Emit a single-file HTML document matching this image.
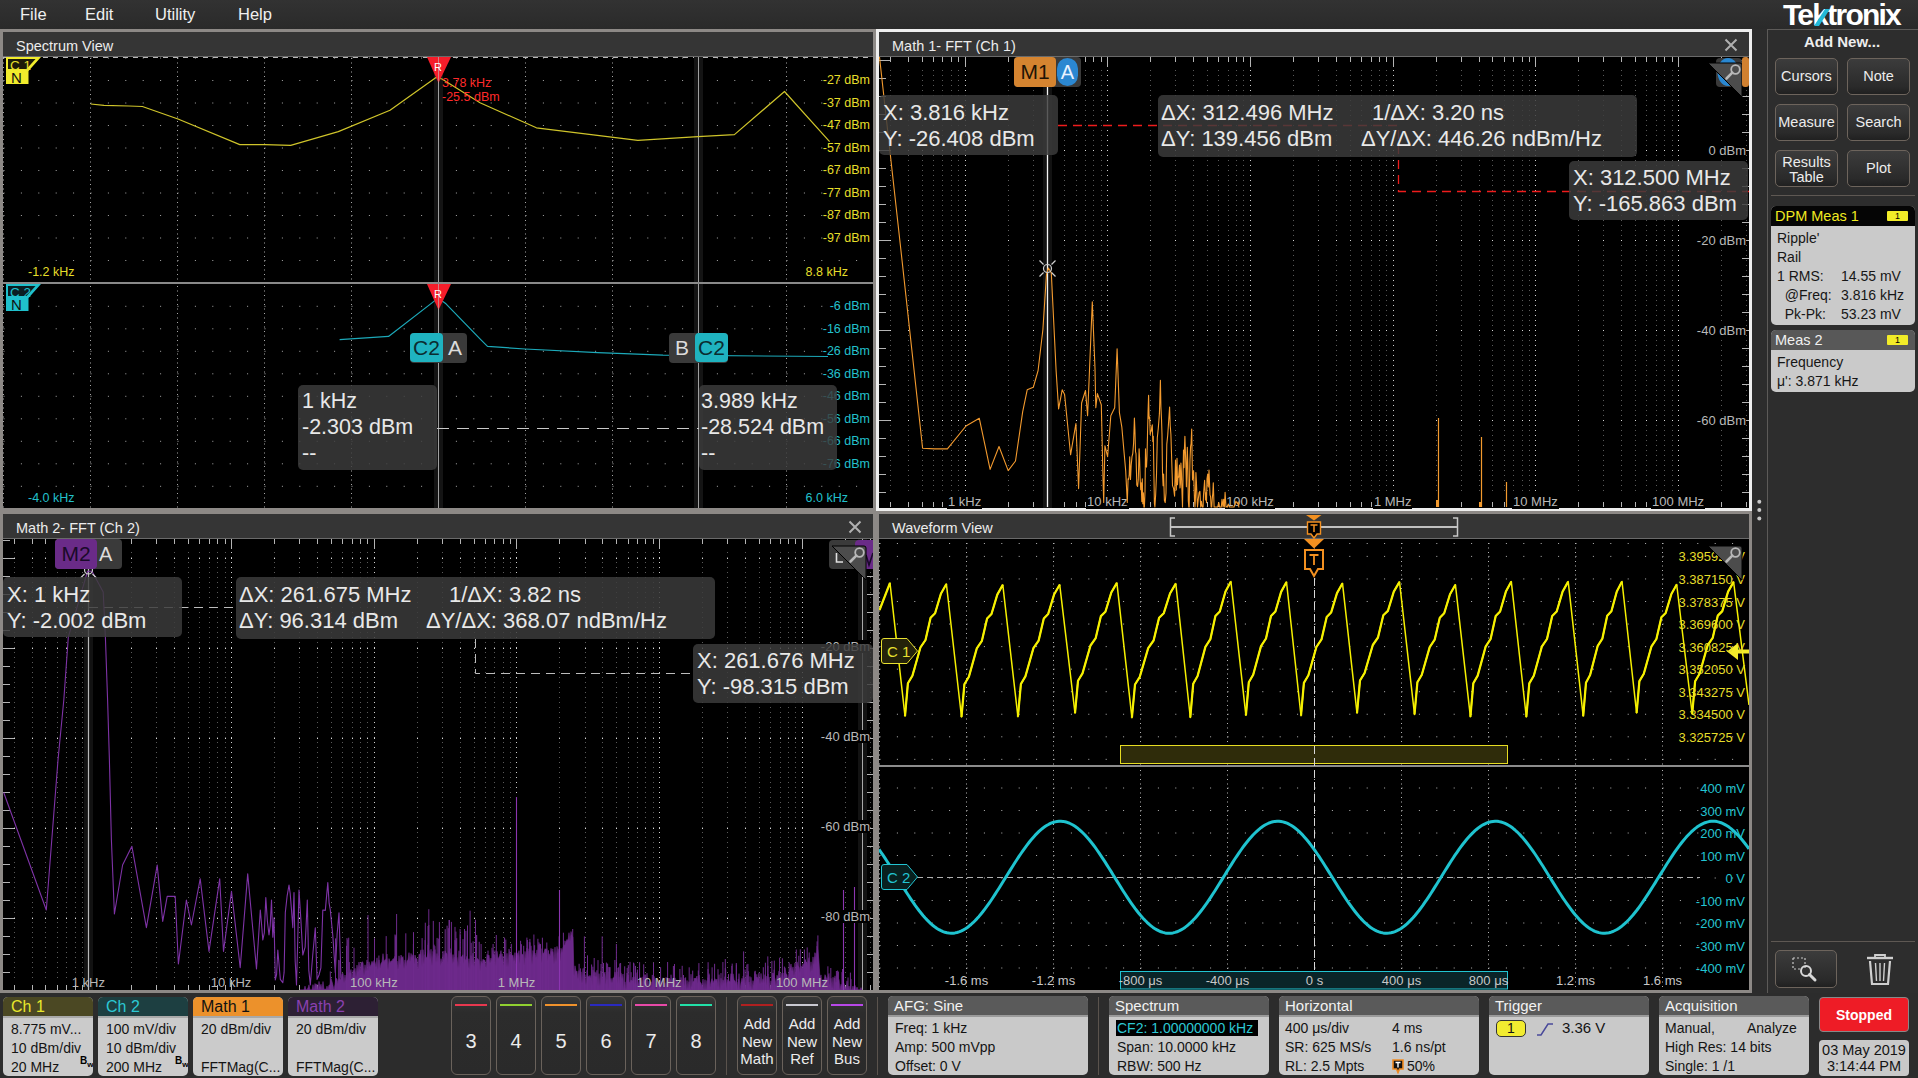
<!DOCTYPE html><html><head><meta charset="utf-8"><style>
html,body{margin:0;padding:0;}
body{width:1918px;height:1078px;overflow:hidden;position:relative;background:#2c2c2c;font-family:"Liberation Sans", sans-serif;}
div{box-sizing:border-box;}
svg{position:absolute;overflow:hidden;}
</style></head><body>
<div style="position:absolute;left:0px;top:0px;width:1918px;height:29px;background:linear-gradient(#323232,#2a2a2a);"></div>
<div style="position:absolute;left:20px;top:6px;font-size:16.5px;line-height:16.5px;color:#f0f0f0;font-weight:normal;white-space:nowrap;">File</div>
<div style="position:absolute;left:85px;top:6px;font-size:16.5px;line-height:16.5px;color:#f0f0f0;font-weight:normal;white-space:nowrap;">Edit</div>
<div style="position:absolute;left:155px;top:6px;font-size:16.5px;line-height:16.5px;color:#f0f0f0;font-weight:normal;white-space:nowrap;">Utility</div>
<div style="position:absolute;left:238px;top:6px;font-size:16.5px;line-height:16.5px;color:#f0f0f0;font-weight:normal;white-space:nowrap;">Help</div>
<div style="position:absolute;left:1783px;top:-1px;font-size:30px;line-height:32px;font-weight:bold;color:#fff;letter-spacing:-1.75px;">Tektronix</div>
<svg style="left:1808px;top:6px" width="26" height="22"><path d="M6 20 L11 20 L22 3 L17 3 Z" fill="#22b8d8"/></svg>
<div style="position:absolute;left:0px;top:29px;width:876px;height:482px;background:#8d8986;"></div>
<div style="position:absolute;left:3px;top:32px;width:870px;height:24px;background:#353535;"></div>
<div style="position:absolute;left:3px;top:56px;width:870px;height:1px;background:#6a6a6a;"></div>
<div style="position:absolute;left:3px;top:57px;width:870px;height:451px;background:#000;"></div>
<div style="position:absolute;left:16px;top:38.5px;font-size:14.5px;line-height:14.5px;color:#ececec;font-weight:normal;white-space:nowrap;">Spectrum View</div>
<div style="position:absolute;left:876px;top:511px;width:876px;height:482px;background:#8d8986;"></div>
<div style="position:absolute;left:879px;top:514px;width:870px;height:24px;background:#353535;"></div>
<div style="position:absolute;left:879px;top:538px;width:870px;height:1px;background:#6a6a6a;"></div>
<div style="position:absolute;left:879px;top:539px;width:870px;height:451px;background:#000;"></div>
<div style="position:absolute;left:892px;top:520.5px;font-size:14.5px;line-height:14.5px;color:#ececec;font-weight:normal;white-space:nowrap;">Waveform View</div>
<div style="position:absolute;left:0px;top:511px;width:876px;height:482px;background:#8d8986;"></div>
<div style="position:absolute;left:3px;top:514px;width:870px;height:24px;background:#353535;"></div>
<div style="position:absolute;left:3px;top:538px;width:870px;height:1px;background:#6a6a6a;"></div>
<div style="position:absolute;left:3px;top:539px;width:870px;height:451px;background:#000;"></div>
<div style="position:absolute;left:16px;top:520.5px;font-size:14.5px;line-height:14.5px;color:#ececec;font-weight:normal;white-space:nowrap;">Math 2- FFT (Ch 2)</div>
<svg style="left:848px;top:520px" width="14" height="14"><path d="M1.5 1.5L12.5 12.5M12.5 1.5L1.5 12.5" stroke="#b0b0b0" stroke-width="2"/></svg>
<div style="position:absolute;left:876px;top:29px;width:876px;height:482px;background:#eeeeee;"></div>
<div style="position:absolute;left:879px;top:32px;width:870px;height:24px;background:#353535;"></div>
<div style="position:absolute;left:879px;top:56px;width:870px;height:1px;background:#6a6a6a;"></div>
<div style="position:absolute;left:879px;top:57px;width:870px;height:451px;background:#000;"></div>
<div style="position:absolute;left:892px;top:38.5px;font-size:14.5px;line-height:14.5px;color:#ececec;font-weight:normal;white-space:nowrap;">Math 1- FFT (Ch 1)</div>
<svg style="left:1724px;top:38px" width="14" height="14"><path d="M1.5 1.5L12.5 12.5M12.5 1.5L1.5 12.5" stroke="#b0b0b0" stroke-width="2"/></svg>
<div style="position:absolute;left:1767px;top:29px;width:151px;height:964px;background:#2d2d2d;border-left:1px solid #5c5a58;border-top:1px solid #5c5a58;"></div>
<div style="position:absolute;left:1742px;top:34px;font-size:15px;line-height:15px;color:#eeeeee;font-weight:bold;white-space:nowrap;width:200px;text-align:center;">Add New...</div>
<div style="position:absolute;left:1775px;top:58px;width:63px;height:37px;border:1px solid #6d645c;border-radius:5px;background:linear-gradient(#3c3c3c,#2a2a2a 80%,#202020);"></div>
<div style="position:absolute;left:1775px;top:69px;font-size:14.5px;line-height:14.5px;color:#ececec;font-weight:normal;white-space:nowrap;width:63px;text-align:center;">Cursors</div>
<div style="position:absolute;left:1847px;top:58px;width:63px;height:37px;border:1px solid #6d645c;border-radius:5px;background:linear-gradient(#3c3c3c,#2a2a2a 80%,#202020);"></div>
<div style="position:absolute;left:1847px;top:69px;font-size:14.5px;line-height:14.5px;color:#ececec;font-weight:normal;white-space:nowrap;width:63px;text-align:center;">Note</div>
<div style="position:absolute;left:1775px;top:104px;width:63px;height:37px;border:1px solid #6d645c;border-radius:5px;background:linear-gradient(#3c3c3c,#2a2a2a 80%,#202020);"></div>
<div style="position:absolute;left:1775px;top:115px;font-size:14.5px;line-height:14.5px;color:#ececec;font-weight:normal;white-space:nowrap;width:63px;text-align:center;">Measure</div>
<div style="position:absolute;left:1847px;top:104px;width:63px;height:37px;border:1px solid #6d645c;border-radius:5px;background:linear-gradient(#3c3c3c,#2a2a2a 80%,#202020);"></div>
<div style="position:absolute;left:1847px;top:115px;font-size:14.5px;line-height:14.5px;color:#ececec;font-weight:normal;white-space:nowrap;width:63px;text-align:center;">Search</div>
<div style="position:absolute;left:1775px;top:150px;width:63px;height:37px;border:1px solid #6d645c;border-radius:5px;background:linear-gradient(#3c3c3c,#2a2a2a 80%,#202020);"></div>
<div style="position:absolute;left:1775px;top:155px;font-size:14.5px;line-height:14.5px;color:#ececec;font-weight:normal;white-space:nowrap;width:63px;text-align:center;">Results</div>
<div style="position:absolute;left:1775px;top:170px;font-size:14.5px;line-height:14.5px;color:#ececec;font-weight:normal;white-space:nowrap;width:63px;text-align:center;">Table</div>
<div style="position:absolute;left:1847px;top:150px;width:63px;height:37px;border:1px solid #6d645c;border-radius:5px;background:linear-gradient(#3c3c3c,#2a2a2a 80%,#202020);"></div>
<div style="position:absolute;left:1847px;top:161px;font-size:14.5px;line-height:14.5px;color:#ececec;font-weight:normal;white-space:nowrap;width:63px;text-align:center;">Plot</div>
<div style="position:absolute;left:1771px;top:195px;width:144px;height:1px;background:#5e5853;"></div>
<svg style="left:3px;top:57px" width="870" height="451" viewBox="3 57 870 451"><line x1="3.5" y1="58" x2="3.5" y2="282" stroke="#a8a8a8" stroke-width="1" stroke-dasharray="1 3.5"/><line x1="90.5" y1="58" x2="90.5" y2="282" stroke="#a8a8a8" stroke-width="1" stroke-dasharray="1 3.5"/><line x1="177.5" y1="58" x2="177.5" y2="282" stroke="#a8a8a8" stroke-width="1" stroke-dasharray="1 3.5"/><line x1="264.5" y1="58" x2="264.5" y2="282" stroke="#a8a8a8" stroke-width="1" stroke-dasharray="1 3.5"/><line x1="351.5" y1="58" x2="351.5" y2="282" stroke="#a8a8a8" stroke-width="1" stroke-dasharray="1 3.5"/><line x1="438.5" y1="58" x2="438.5" y2="282" stroke="#a8a8a8" stroke-width="1" stroke-dasharray="1 3.5"/><line x1="525.5" y1="58" x2="525.5" y2="282" stroke="#a8a8a8" stroke-width="1" stroke-dasharray="1 3.5"/><line x1="612.5" y1="58" x2="612.5" y2="282" stroke="#a8a8a8" stroke-width="1" stroke-dasharray="1 3.5"/><line x1="699.5" y1="58" x2="699.5" y2="282" stroke="#a8a8a8" stroke-width="1" stroke-dasharray="1 3.5"/><line x1="786.5" y1="58" x2="786.5" y2="282" stroke="#a8a8a8" stroke-width="1" stroke-dasharray="1 3.5"/><line x1="873.5" y1="58" x2="873.5" y2="282" stroke="#a8a8a8" stroke-width="1" stroke-dasharray="1 3.5"/><line x1="3.5" y1="58.0" x2="873" y2="58.0" stroke="#a8a8a8" stroke-width="1" stroke-dasharray="1 16.4"/><line x1="3.5" y1="80.5" x2="873" y2="80.5" stroke="#a8a8a8" stroke-width="1" stroke-dasharray="1 16.4"/><line x1="3.5" y1="103.0" x2="873" y2="103.0" stroke="#a8a8a8" stroke-width="1" stroke-dasharray="1 16.4"/><line x1="3.5" y1="125.5" x2="873" y2="125.5" stroke="#a8a8a8" stroke-width="1" stroke-dasharray="1 16.4"/><line x1="3.5" y1="148.0" x2="873" y2="148.0" stroke="#a8a8a8" stroke-width="1" stroke-dasharray="1 16.4"/><line x1="3.5" y1="170.5" x2="873" y2="170.5" stroke="#a8a8a8" stroke-width="1" stroke-dasharray="1 16.4"/><line x1="3.5" y1="193.0" x2="873" y2="193.0" stroke="#a8a8a8" stroke-width="1" stroke-dasharray="1 16.4"/><line x1="3.5" y1="215.5" x2="873" y2="215.5" stroke="#a8a8a8" stroke-width="1" stroke-dasharray="1 16.4"/><line x1="3.5" y1="238.0" x2="873" y2="238.0" stroke="#a8a8a8" stroke-width="1" stroke-dasharray="1 16.4"/><line x1="3.5" y1="260.5" x2="873" y2="260.5" stroke="#a8a8a8" stroke-width="1" stroke-dasharray="1 16.4"/><line x1="3" y1="57.5" x2="873" y2="57.5" stroke="#b8b8b8" stroke-width="1" stroke-dasharray="5 5"/><line x1="3.5" y1="286" x2="3.5" y2="508" stroke="#a8a8a8" stroke-width="1" stroke-dasharray="1 3.5"/><line x1="90.5" y1="286" x2="90.5" y2="508" stroke="#a8a8a8" stroke-width="1" stroke-dasharray="1 3.5"/><line x1="177.5" y1="286" x2="177.5" y2="508" stroke="#a8a8a8" stroke-width="1" stroke-dasharray="1 3.5"/><line x1="264.5" y1="286" x2="264.5" y2="508" stroke="#a8a8a8" stroke-width="1" stroke-dasharray="1 3.5"/><line x1="351.5" y1="286" x2="351.5" y2="508" stroke="#a8a8a8" stroke-width="1" stroke-dasharray="1 3.5"/><line x1="438.5" y1="286" x2="438.5" y2="508" stroke="#a8a8a8" stroke-width="1" stroke-dasharray="1 3.5"/><line x1="525.5" y1="286" x2="525.5" y2="508" stroke="#a8a8a8" stroke-width="1" stroke-dasharray="1 3.5"/><line x1="612.5" y1="286" x2="612.5" y2="508" stroke="#a8a8a8" stroke-width="1" stroke-dasharray="1 3.5"/><line x1="699.5" y1="286" x2="699.5" y2="508" stroke="#a8a8a8" stroke-width="1" stroke-dasharray="1 3.5"/><line x1="786.5" y1="286" x2="786.5" y2="508" stroke="#a8a8a8" stroke-width="1" stroke-dasharray="1 3.5"/><line x1="873.5" y1="286" x2="873.5" y2="508" stroke="#a8a8a8" stroke-width="1" stroke-dasharray="1 3.5"/><line x1="3.5" y1="306.3" x2="873" y2="306.3" stroke="#a8a8a8" stroke-width="1" stroke-dasharray="1 16.4"/><line x1="3.5" y1="328.8" x2="873" y2="328.8" stroke="#a8a8a8" stroke-width="1" stroke-dasharray="1 16.4"/><line x1="3.5" y1="351.3" x2="873" y2="351.3" stroke="#a8a8a8" stroke-width="1" stroke-dasharray="1 16.4"/><line x1="3.5" y1="373.8" x2="873" y2="373.8" stroke="#a8a8a8" stroke-width="1" stroke-dasharray="1 16.4"/><line x1="3.5" y1="396.3" x2="873" y2="396.3" stroke="#a8a8a8" stroke-width="1" stroke-dasharray="1 16.4"/><line x1="3.5" y1="418.8" x2="873" y2="418.8" stroke="#a8a8a8" stroke-width="1" stroke-dasharray="1 16.4"/><line x1="3.5" y1="441.3" x2="873" y2="441.3" stroke="#a8a8a8" stroke-width="1" stroke-dasharray="1 16.4"/><line x1="3.5" y1="463.8" x2="873" y2="463.8" stroke="#a8a8a8" stroke-width="1" stroke-dasharray="1 16.4"/><line x1="3.5" y1="486.3" x2="873" y2="486.3" stroke="#a8a8a8" stroke-width="1" stroke-dasharray="1 16.4"/><rect x="434.0" y="57" width="9" height="451" fill="#141414"/><line x1="438.5" y1="57" x2="438.5" y2="508" stroke="#a0a0a0" stroke-width="1"/><rect x="694.0" y="57" width="9" height="451" fill="#141414"/><line x1="698.5" y1="57" x2="698.5" y2="508" stroke="#a0a0a0" stroke-width="1"/><rect x="3" y="282" width="870" height="2" fill="#8a8a8a"/><path d="M90.7 104 L104 105.3 L129 106 L142.4 106.5 L178 119 L239.8 144.6 L265 144.6 L290.7 145.4 L338.3 131.6 L390 110.3 L436 77.5 L442 79 L480 102.8 L536.4 127.8 L637.9 140.4 L698 136.6 L734.4 134.6 L784.5 91.5 L829.6 141.6" fill="none" stroke="#cfc42a" stroke-width="1.2" stroke-linejoin="round" /><path d="M339.6 339.7 L388.5 336.4 L432.3 302.6 L438 298 L446 303.8 L480 338.9 L487.5 346.4 L525 349 L597.8 352.7 L663 355.2 L828 356.5" fill="none" stroke="#1ca9b9" stroke-width="1.2" stroke-linejoin="round" /><line x1="437" y1="428.5" x2="699" y2="428.5" stroke="#c8c8c8" stroke-width="1" stroke-dasharray="12 8"/><path d="M427 57 L451 57 L438.5 83 Z" fill="#f51d2a"/><line x1="438.5" y1="57" x2="438.5" y2="83" stroke="#c0c0c0" stroke-width="1" opacity="0.6"/><path d="M427 284 L451 284 L438.5 310 Z" fill="#f51d2a"/><line x1="438.5" y1="284" x2="438.5" y2="310" stroke="#c0c0c0" stroke-width="1" opacity="0.6"/><path d="M6 57 H41 L28.5 71 V84 H6 Z" fill="#f2ec2c"/><path d="M8 59 H35.5 L26.5 69 H8 Z" fill="#1d1b08"/><path d="M6 284 H41 L28.5 298 V311 H6 Z" fill="#1fc0cc"/><path d="M8 286 H35.5 L26.5 296 H8 Z" fill="#0a1e22"/></svg>
<div style="position:absolute;left:10px;top:58.5px;font-size:13.5px;line-height:13.5px;color:#e8e02c;font-weight:normal;white-space:nowrap;">C 1</div>
<div style="position:absolute;left:11px;top:70px;font-size:15px;line-height:15px;color:#111;font-weight:normal;white-space:nowrap;">N</div>
<div style="position:absolute;left:10px;top:285.5px;font-size:13.5px;line-height:13.5px;color:#1fc0cc;font-weight:normal;white-space:nowrap;">C 2</div>
<div style="position:absolute;left:11px;top:297px;font-size:15px;line-height:15px;color:#111;font-weight:normal;white-space:nowrap;">N</div>
<div style="position:absolute;left:434px;top:62px;font-size:11px;line-height:11px;color:#fff;font-weight:normal;white-space:nowrap;">R</div>
<div style="position:absolute;left:434px;top:289px;font-size:11px;line-height:11px;color:#fff;font-weight:normal;white-space:nowrap;">R</div>
<div style="position:absolute;left:442px;top:77px;font-size:12.5px;line-height:12.5px;color:#ff2a2a;font-weight:normal;white-space:nowrap;">3.78 kHz</div>
<div style="position:absolute;left:442px;top:91px;font-size:12.5px;line-height:12.5px;color:#ff2a2a;font-weight:normal;white-space:nowrap;">-25.5 dBm</div>
<div style="position:absolute;right:1048px;top:74.0px;font-size:12.5px;line-height:12.5px;color:#e6de2a;font-weight:normal;white-space:nowrap;">-27 dBm</div>
<div style="position:absolute;right:1048px;top:96.5px;font-size:12.5px;line-height:12.5px;color:#e6de2a;font-weight:normal;white-space:nowrap;">-37 dBm</div>
<div style="position:absolute;right:1048px;top:119.0px;font-size:12.5px;line-height:12.5px;color:#e6de2a;font-weight:normal;white-space:nowrap;">-47 dBm</div>
<div style="position:absolute;right:1048px;top:141.5px;font-size:12.5px;line-height:12.5px;color:#e6de2a;font-weight:normal;white-space:nowrap;">-57 dBm</div>
<div style="position:absolute;right:1048px;top:164.0px;font-size:12.5px;line-height:12.5px;color:#e6de2a;font-weight:normal;white-space:nowrap;">-67 dBm</div>
<div style="position:absolute;right:1048px;top:186.5px;font-size:12.5px;line-height:12.5px;color:#e6de2a;font-weight:normal;white-space:nowrap;">-77 dBm</div>
<div style="position:absolute;right:1048px;top:209.0px;font-size:12.5px;line-height:12.5px;color:#e6de2a;font-weight:normal;white-space:nowrap;">-87 dBm</div>
<div style="position:absolute;right:1048px;top:231.5px;font-size:12.5px;line-height:12.5px;color:#e6de2a;font-weight:normal;white-space:nowrap;">-97 dBm</div>
<div style="position:absolute;right:1048px;top:300.0px;font-size:12.5px;line-height:12.5px;color:#22c0cc;font-weight:normal;white-space:nowrap;">-6 dBm</div>
<div style="position:absolute;right:1048px;top:322.5px;font-size:12.5px;line-height:12.5px;color:#22c0cc;font-weight:normal;white-space:nowrap;">-16 dBm</div>
<div style="position:absolute;right:1048px;top:345.0px;font-size:12.5px;line-height:12.5px;color:#22c0cc;font-weight:normal;white-space:nowrap;">-26 dBm</div>
<div style="position:absolute;right:1048px;top:367.5px;font-size:12.5px;line-height:12.5px;color:#22c0cc;font-weight:normal;white-space:nowrap;">-36 dBm</div>
<div style="position:absolute;right:1048px;top:390.0px;font-size:12.5px;line-height:12.5px;color:#22c0cc;font-weight:normal;white-space:nowrap;">-46 dBm</div>
<div style="position:absolute;right:1048px;top:412.5px;font-size:12.5px;line-height:12.5px;color:#22c0cc;font-weight:normal;white-space:nowrap;">-56 dBm</div>
<div style="position:absolute;right:1048px;top:435.0px;font-size:12.5px;line-height:12.5px;color:#22c0cc;font-weight:normal;white-space:nowrap;">-66 dBm</div>
<div style="position:absolute;right:1048px;top:457.5px;font-size:12.5px;line-height:12.5px;color:#22c0cc;font-weight:normal;white-space:nowrap;">-76 dBm</div>
<div style="position:absolute;left:28px;top:266px;font-size:12.5px;line-height:12.5px;color:#e6de2a;font-weight:normal;white-space:nowrap;">-1.2 kHz</div>
<div style="position:absolute;right:1070px;top:266px;font-size:12.5px;line-height:12.5px;color:#e6de2a;font-weight:normal;white-space:nowrap;">8.8 kHz</div>
<div style="position:absolute;left:28px;top:492px;font-size:12.5px;line-height:12.5px;color:#22c0cc;font-weight:normal;white-space:nowrap;">-4.0 kHz</div>
<div style="position:absolute;right:1070px;top:492px;font-size:12.5px;line-height:12.5px;color:#22c0cc;font-weight:normal;white-space:nowrap;">6.0 kHz</div>
<div style="position:absolute;left:410px;top:333px;width:57px;height:30px;background:#3a3a3a;border-radius:4px;"></div>
<div style="position:absolute;left:410px;top:333px;width:33px;height:29px;background:#1fb3c0;border-radius:4px;color:#0b2c30;font-size:21px;line-height:29px;text-align:center;">C2</div><div style="position:absolute;left:443px;top:333px;width:24px;height:29px;background:transparent;border-radius:4px;color:#dcdcdc;font-size:21px;line-height:29px;text-align:center;">A</div>
<div style="position:absolute;left:669px;top:333px;width:59px;height:30px;background:#3a3a3a;border-radius:4px;"></div>
<div style="position:absolute;left:669px;top:333px;width:26px;height:29px;background:transparent;border-radius:4px;color:#dcdcdc;font-size:21px;line-height:29px;text-align:center;">B</div><div style="position:absolute;left:695px;top:333px;width:33px;height:29px;background:#1fb3c0;border-radius:4px;color:#0b2c30;font-size:21px;line-height:29px;text-align:center;">C2</div>
<div style="position:absolute;left:298px;top:385px;width:139px;height:85px;background:rgba(60,60,60,0.84);border-radius:5px;"></div><div style="position:absolute;left:302px;top:388px;font-size:21.5px;line-height:26px;color:#e8e8e8;white-space:nowrap;">1 kHz</div><div style="position:absolute;left:302px;top:414px;font-size:21.5px;line-height:26px;color:#e8e8e8;white-space:nowrap;">-2.303 dBm</div><div style="position:absolute;left:302px;top:440px;font-size:21.5px;line-height:26px;color:#e8e8e8;white-space:nowrap;">--</div>
<div style="position:absolute;left:699px;top:385px;width:138px;height:85px;background:rgba(60,60,60,0.84);border-radius:5px;"></div><div style="position:absolute;left:701px;top:388px;font-size:21.5px;line-height:26px;color:#e8e8e8;white-space:nowrap;">3.989 kHz</div><div style="position:absolute;left:701px;top:414px;font-size:21.5px;line-height:26px;color:#e8e8e8;white-space:nowrap;">-28.524 dBm</div><div style="position:absolute;left:701px;top:440px;font-size:21.5px;line-height:26px;color:#e8e8e8;white-space:nowrap;">--</div>
<svg style="left:879px;top:57px" width="870" height="451" viewBox="879 57 870 451"><line x1="890.5" y1="70" x2="890.5" y2="495" stroke="#5a5a5a" stroke-width="1" stroke-dasharray="1 4"/><line x1="908.5" y1="70" x2="908.5" y2="495" stroke="#5a5a5a" stroke-width="1" stroke-dasharray="1 4"/><line x1="922.5" y1="70" x2="922.5" y2="495" stroke="#5a5a5a" stroke-width="1" stroke-dasharray="1 4"/><line x1="933.5" y1="70" x2="933.5" y2="495" stroke="#5a5a5a" stroke-width="1" stroke-dasharray="1 4"/><line x1="942.5" y1="70" x2="942.5" y2="495" stroke="#5a5a5a" stroke-width="1" stroke-dasharray="1 4"/><line x1="951.5" y1="70" x2="951.5" y2="495" stroke="#5a5a5a" stroke-width="1" stroke-dasharray="1 4"/><line x1="958.5" y1="70" x2="958.5" y2="495" stroke="#5a5a5a" stroke-width="1" stroke-dasharray="1 4"/><line x1="965.5" y1="70" x2="965.5" y2="495" stroke="#cfcfcf" stroke-width="1" stroke-dasharray="1 4"/><line x1="1008.5" y1="70" x2="1008.5" y2="495" stroke="#5a5a5a" stroke-width="1" stroke-dasharray="1 4"/><line x1="1033.5" y1="70" x2="1033.5" y2="495" stroke="#5a5a5a" stroke-width="1" stroke-dasharray="1 4"/><line x1="1051.5" y1="70" x2="1051.5" y2="495" stroke="#5a5a5a" stroke-width="1" stroke-dasharray="1 4"/><line x1="1064.5" y1="70" x2="1064.5" y2="495" stroke="#5a5a5a" stroke-width="1" stroke-dasharray="1 4"/><line x1="1076.5" y1="70" x2="1076.5" y2="495" stroke="#5a5a5a" stroke-width="1" stroke-dasharray="1 4"/><line x1="1085.5" y1="70" x2="1085.5" y2="495" stroke="#5a5a5a" stroke-width="1" stroke-dasharray="1 4"/><line x1="1093.5" y1="70" x2="1093.5" y2="495" stroke="#5a5a5a" stroke-width="1" stroke-dasharray="1 4"/><line x1="1101.5" y1="70" x2="1101.5" y2="495" stroke="#5a5a5a" stroke-width="1" stroke-dasharray="1 4"/><line x1="1107.5" y1="70" x2="1107.5" y2="495" stroke="#cfcfcf" stroke-width="1" stroke-dasharray="1 4"/><line x1="1150.5" y1="70" x2="1150.5" y2="495" stroke="#5a5a5a" stroke-width="1" stroke-dasharray="1 4"/><line x1="1175.5" y1="70" x2="1175.5" y2="495" stroke="#5a5a5a" stroke-width="1" stroke-dasharray="1 4"/><line x1="1193.5" y1="70" x2="1193.5" y2="495" stroke="#5a5a5a" stroke-width="1" stroke-dasharray="1 4"/><line x1="1207.5" y1="70" x2="1207.5" y2="495" stroke="#5a5a5a" stroke-width="1" stroke-dasharray="1 4"/><line x1="1218.5" y1="70" x2="1218.5" y2="495" stroke="#5a5a5a" stroke-width="1" stroke-dasharray="1 4"/><line x1="1228.5" y1="70" x2="1228.5" y2="495" stroke="#5a5a5a" stroke-width="1" stroke-dasharray="1 4"/><line x1="1236.5" y1="70" x2="1236.5" y2="495" stroke="#5a5a5a" stroke-width="1" stroke-dasharray="1 4"/><line x1="1243.5" y1="70" x2="1243.5" y2="495" stroke="#5a5a5a" stroke-width="1" stroke-dasharray="1 4"/><line x1="1250.5" y1="70" x2="1250.5" y2="495" stroke="#cfcfcf" stroke-width="1" stroke-dasharray="1 4"/><line x1="1293.5" y1="70" x2="1293.5" y2="495" stroke="#5a5a5a" stroke-width="1" stroke-dasharray="1 4"/><line x1="1318.5" y1="70" x2="1318.5" y2="495" stroke="#5a5a5a" stroke-width="1" stroke-dasharray="1 4"/><line x1="1336.5" y1="70" x2="1336.5" y2="495" stroke="#5a5a5a" stroke-width="1" stroke-dasharray="1 4"/><line x1="1350.5" y1="70" x2="1350.5" y2="495" stroke="#5a5a5a" stroke-width="1" stroke-dasharray="1 4"/><line x1="1361.5" y1="70" x2="1361.5" y2="495" stroke="#5a5a5a" stroke-width="1" stroke-dasharray="1 4"/><line x1="1371.5" y1="70" x2="1371.5" y2="495" stroke="#5a5a5a" stroke-width="1" stroke-dasharray="1 4"/><line x1="1379.5" y1="70" x2="1379.5" y2="495" stroke="#5a5a5a" stroke-width="1" stroke-dasharray="1 4"/><line x1="1386.5" y1="70" x2="1386.5" y2="495" stroke="#5a5a5a" stroke-width="1" stroke-dasharray="1 4"/><line x1="1393.5" y1="70" x2="1393.5" y2="495" stroke="#cfcfcf" stroke-width="1" stroke-dasharray="1 4"/><line x1="1436.5" y1="70" x2="1436.5" y2="495" stroke="#5a5a5a" stroke-width="1" stroke-dasharray="1 4"/><line x1="1461.5" y1="70" x2="1461.5" y2="495" stroke="#5a5a5a" stroke-width="1" stroke-dasharray="1 4"/><line x1="1479.5" y1="70" x2="1479.5" y2="495" stroke="#5a5a5a" stroke-width="1" stroke-dasharray="1 4"/><line x1="1492.5" y1="70" x2="1492.5" y2="495" stroke="#5a5a5a" stroke-width="1" stroke-dasharray="1 4"/><line x1="1504.5" y1="70" x2="1504.5" y2="495" stroke="#5a5a5a" stroke-width="1" stroke-dasharray="1 4"/><line x1="1513.5" y1="70" x2="1513.5" y2="495" stroke="#5a5a5a" stroke-width="1" stroke-dasharray="1 4"/><line x1="1522.5" y1="70" x2="1522.5" y2="495" stroke="#5a5a5a" stroke-width="1" stroke-dasharray="1 4"/><line x1="1529.5" y1="70" x2="1529.5" y2="495" stroke="#5a5a5a" stroke-width="1" stroke-dasharray="1 4"/><line x1="1535.5" y1="70" x2="1535.5" y2="495" stroke="#cfcfcf" stroke-width="1" stroke-dasharray="1 4"/><line x1="1578.5" y1="70" x2="1578.5" y2="495" stroke="#5a5a5a" stroke-width="1" stroke-dasharray="1 4"/><line x1="1603.5" y1="70" x2="1603.5" y2="495" stroke="#5a5a5a" stroke-width="1" stroke-dasharray="1 4"/><line x1="1621.5" y1="70" x2="1621.5" y2="495" stroke="#5a5a5a" stroke-width="1" stroke-dasharray="1 4"/><line x1="1635.5" y1="70" x2="1635.5" y2="495" stroke="#5a5a5a" stroke-width="1" stroke-dasharray="1 4"/><line x1="1646.5" y1="70" x2="1646.5" y2="495" stroke="#5a5a5a" stroke-width="1" stroke-dasharray="1 4"/><line x1="1656.5" y1="70" x2="1656.5" y2="495" stroke="#5a5a5a" stroke-width="1" stroke-dasharray="1 4"/><line x1="1664.5" y1="70" x2="1664.5" y2="495" stroke="#5a5a5a" stroke-width="1" stroke-dasharray="1 4"/><line x1="1672.5" y1="70" x2="1672.5" y2="495" stroke="#5a5a5a" stroke-width="1" stroke-dasharray="1 4"/><line x1="1678.5" y1="70" x2="1678.5" y2="495" stroke="#cfcfcf" stroke-width="1" stroke-dasharray="1 4"/><line x1="1721.5" y1="70" x2="1721.5" y2="495" stroke="#5a5a5a" stroke-width="1" stroke-dasharray="1 4"/><line x1="1746.5" y1="70" x2="1746.5" y2="495" stroke="#5a5a5a" stroke-width="1" stroke-dasharray="1 4"/><path d="M890 60h1v1h-1zM908 60h1v1h-1zM922 60h1v1h-1zM933 60h1v1h-1zM942 60h1v1h-1zM951 60h1v1h-1zM958 60h1v1h-1zM965 60h1v1h-1zM1008 60h1v1h-1zM1033 60h1v1h-1zM1051 60h1v1h-1zM1064 60h1v1h-1zM1076 60h1v1h-1zM1085 60h1v1h-1zM1093 60h1v1h-1zM1101 60h1v1h-1zM1107 60h1v1h-1zM1150 60h1v1h-1zM1175 60h1v1h-1zM1193 60h1v1h-1zM1207 60h1v1h-1zM1218 60h1v1h-1zM1228 60h1v1h-1zM1236 60h1v1h-1zM1243 60h1v1h-1zM1250 60h1v1h-1zM1293 60h1v1h-1zM1318 60h1v1h-1zM1336 60h1v1h-1zM1350 60h1v1h-1zM1361 60h1v1h-1zM1371 60h1v1h-1zM1379 60h1v1h-1zM1386 60h1v1h-1zM1393 60h1v1h-1zM1436 60h1v1h-1zM1461 60h1v1h-1zM1479 60h1v1h-1zM1492 60h1v1h-1zM1504 60h1v1h-1zM1513 60h1v1h-1zM1522 60h1v1h-1zM1529 60h1v1h-1zM1535 60h1v1h-1zM1578 60h1v1h-1zM1603 60h1v1h-1zM1621 60h1v1h-1zM1635 60h1v1h-1zM1646 60h1v1h-1zM1656 60h1v1h-1zM1664 60h1v1h-1zM1672 60h1v1h-1zM1678 60h1v1h-1zM1721 60h1v1h-1zM1746 60h1v1h-1zM890 150h1v1h-1zM908 150h1v1h-1zM922 150h1v1h-1zM933 150h1v1h-1zM942 150h1v1h-1zM951 150h1v1h-1zM958 150h1v1h-1zM965 150h1v1h-1zM1008 150h1v1h-1zM1033 150h1v1h-1zM1051 150h1v1h-1zM1064 150h1v1h-1zM1076 150h1v1h-1zM1085 150h1v1h-1zM1093 150h1v1h-1zM1101 150h1v1h-1zM1107 150h1v1h-1zM1150 150h1v1h-1zM1175 150h1v1h-1zM1193 150h1v1h-1zM1207 150h1v1h-1zM1218 150h1v1h-1zM1228 150h1v1h-1zM1236 150h1v1h-1zM1243 150h1v1h-1zM1250 150h1v1h-1zM1293 150h1v1h-1zM1318 150h1v1h-1zM1336 150h1v1h-1zM1350 150h1v1h-1zM1361 150h1v1h-1zM1371 150h1v1h-1zM1379 150h1v1h-1zM1386 150h1v1h-1zM1393 150h1v1h-1zM1436 150h1v1h-1zM1461 150h1v1h-1zM1479 150h1v1h-1zM1492 150h1v1h-1zM1504 150h1v1h-1zM1513 150h1v1h-1zM1522 150h1v1h-1zM1529 150h1v1h-1zM1535 150h1v1h-1zM1578 150h1v1h-1zM1603 150h1v1h-1zM1621 150h1v1h-1zM1635 150h1v1h-1zM1646 150h1v1h-1zM1656 150h1v1h-1zM1664 150h1v1h-1zM1672 150h1v1h-1zM1678 150h1v1h-1zM1721 150h1v1h-1zM1746 150h1v1h-1zM890 240h1v1h-1zM908 240h1v1h-1zM922 240h1v1h-1zM933 240h1v1h-1zM942 240h1v1h-1zM951 240h1v1h-1zM958 240h1v1h-1zM965 240h1v1h-1zM1008 240h1v1h-1zM1033 240h1v1h-1zM1051 240h1v1h-1zM1064 240h1v1h-1zM1076 240h1v1h-1zM1085 240h1v1h-1zM1093 240h1v1h-1zM1101 240h1v1h-1zM1107 240h1v1h-1zM1150 240h1v1h-1zM1175 240h1v1h-1zM1193 240h1v1h-1zM1207 240h1v1h-1zM1218 240h1v1h-1zM1228 240h1v1h-1zM1236 240h1v1h-1zM1243 240h1v1h-1zM1250 240h1v1h-1zM1293 240h1v1h-1zM1318 240h1v1h-1zM1336 240h1v1h-1zM1350 240h1v1h-1zM1361 240h1v1h-1zM1371 240h1v1h-1zM1379 240h1v1h-1zM1386 240h1v1h-1zM1393 240h1v1h-1zM1436 240h1v1h-1zM1461 240h1v1h-1zM1479 240h1v1h-1zM1492 240h1v1h-1zM1504 240h1v1h-1zM1513 240h1v1h-1zM1522 240h1v1h-1zM1529 240h1v1h-1zM1535 240h1v1h-1zM1578 240h1v1h-1zM1603 240h1v1h-1zM1621 240h1v1h-1zM1635 240h1v1h-1zM1646 240h1v1h-1zM1656 240h1v1h-1zM1664 240h1v1h-1zM1672 240h1v1h-1zM1678 240h1v1h-1zM1721 240h1v1h-1zM1746 240h1v1h-1zM890 330h1v1h-1zM908 330h1v1h-1zM922 330h1v1h-1zM933 330h1v1h-1zM942 330h1v1h-1zM951 330h1v1h-1zM958 330h1v1h-1zM965 330h1v1h-1zM1008 330h1v1h-1zM1033 330h1v1h-1zM1051 330h1v1h-1zM1064 330h1v1h-1zM1076 330h1v1h-1zM1085 330h1v1h-1zM1093 330h1v1h-1zM1101 330h1v1h-1zM1107 330h1v1h-1zM1150 330h1v1h-1zM1175 330h1v1h-1zM1193 330h1v1h-1zM1207 330h1v1h-1zM1218 330h1v1h-1zM1228 330h1v1h-1zM1236 330h1v1h-1zM1243 330h1v1h-1zM1250 330h1v1h-1zM1293 330h1v1h-1zM1318 330h1v1h-1zM1336 330h1v1h-1zM1350 330h1v1h-1zM1361 330h1v1h-1zM1371 330h1v1h-1zM1379 330h1v1h-1zM1386 330h1v1h-1zM1393 330h1v1h-1zM1436 330h1v1h-1zM1461 330h1v1h-1zM1479 330h1v1h-1zM1492 330h1v1h-1zM1504 330h1v1h-1zM1513 330h1v1h-1zM1522 330h1v1h-1zM1529 330h1v1h-1zM1535 330h1v1h-1zM1578 330h1v1h-1zM1603 330h1v1h-1zM1621 330h1v1h-1zM1635 330h1v1h-1zM1646 330h1v1h-1zM1656 330h1v1h-1zM1664 330h1v1h-1zM1672 330h1v1h-1zM1678 330h1v1h-1zM1721 330h1v1h-1zM1746 330h1v1h-1zM890 420h1v1h-1zM908 420h1v1h-1zM922 420h1v1h-1zM933 420h1v1h-1zM942 420h1v1h-1zM951 420h1v1h-1zM958 420h1v1h-1zM965 420h1v1h-1zM1008 420h1v1h-1zM1033 420h1v1h-1zM1051 420h1v1h-1zM1064 420h1v1h-1zM1076 420h1v1h-1zM1085 420h1v1h-1zM1093 420h1v1h-1zM1101 420h1v1h-1zM1107 420h1v1h-1zM1150 420h1v1h-1zM1175 420h1v1h-1zM1193 420h1v1h-1zM1207 420h1v1h-1zM1218 420h1v1h-1zM1228 420h1v1h-1zM1236 420h1v1h-1zM1243 420h1v1h-1zM1250 420h1v1h-1zM1293 420h1v1h-1zM1318 420h1v1h-1zM1336 420h1v1h-1zM1350 420h1v1h-1zM1361 420h1v1h-1zM1371 420h1v1h-1zM1379 420h1v1h-1zM1386 420h1v1h-1zM1393 420h1v1h-1zM1436 420h1v1h-1zM1461 420h1v1h-1zM1479 420h1v1h-1zM1492 420h1v1h-1zM1504 420h1v1h-1zM1513 420h1v1h-1zM1522 420h1v1h-1zM1529 420h1v1h-1zM1535 420h1v1h-1zM1578 420h1v1h-1zM1603 420h1v1h-1zM1621 420h1v1h-1zM1635 420h1v1h-1zM1646 420h1v1h-1zM1656 420h1v1h-1zM1664 420h1v1h-1zM1672 420h1v1h-1zM1678 420h1v1h-1zM1721 420h1v1h-1zM1746 420h1v1h-1z" fill="#d8d8d8"/><path d="M890.5 57v5M890.5 507v-5M908.5 57v5M908.5 507v-5M922.5 57v5M922.5 507v-5M933.5 57v5M933.5 507v-5M942.5 57v5M942.5 507v-5M951.5 57v5M951.5 507v-5M958.5 57v5M958.5 507v-5M965.5 57v10M965.5 507v-10M1008.5 57v5M1008.5 507v-5M1033.5 57v5M1033.5 507v-5M1051.5 57v5M1051.5 507v-5M1064.5 57v5M1064.5 507v-5M1076.5 57v5M1076.5 507v-5M1085.5 57v5M1085.5 507v-5M1093.5 57v5M1093.5 507v-5M1101.5 57v5M1101.5 507v-5M1107.5 57v10M1107.5 507v-10M1150.5 57v5M1150.5 507v-5M1175.5 57v5M1175.5 507v-5M1193.5 57v5M1193.5 507v-5M1207.5 57v5M1207.5 507v-5M1218.5 57v5M1218.5 507v-5M1228.5 57v5M1228.5 507v-5M1236.5 57v5M1236.5 507v-5M1243.5 57v5M1243.5 507v-5M1250.5 57v10M1250.5 507v-10M1293.5 57v5M1293.5 507v-5M1318.5 57v5M1318.5 507v-5M1336.5 57v5M1336.5 507v-5M1350.5 57v5M1350.5 507v-5M1361.5 57v5M1361.5 507v-5M1371.5 57v5M1371.5 507v-5M1379.5 57v5M1379.5 507v-5M1386.5 57v5M1386.5 507v-5M1393.5 57v10M1393.5 507v-10M1436.5 57v5M1436.5 507v-5M1461.5 57v5M1461.5 507v-5M1479.5 57v5M1479.5 507v-5M1492.5 57v5M1492.5 507v-5M1504.5 57v5M1504.5 507v-5M1513.5 57v5M1513.5 507v-5M1522.5 57v5M1522.5 507v-5M1529.5 57v5M1529.5 507v-5M1535.5 57v10M1535.5 507v-10M1578.5 57v5M1578.5 507v-5M1603.5 57v5M1603.5 507v-5M1621.5 57v5M1621.5 507v-5M1635.5 57v5M1635.5 507v-5M1646.5 57v5M1646.5 507v-5M1656.5 57v5M1656.5 507v-5M1664.5 57v5M1664.5 507v-5M1672.5 57v5M1672.5 507v-5M1678.5 57v10M1678.5 507v-10M1721.5 57v5M1721.5 507v-5M1746.5 57v5M1746.5 507v-5" stroke="#b4b4b4" stroke-width="1"/><path d="M879 60.5h11M1749 60.5h-11M879 78.5h7M1749 78.5h-7M879 96.5h7M1749 96.5h-7M879 114.5h7M1749 114.5h-7M879 132.5h7M1749 132.5h-7M879 150.5h11M1749 150.5h-11M879 168.5h7M1749 168.5h-7M879 186.5h7M1749 186.5h-7M879 204.5h7M1749 204.5h-7M879 222.5h7M1749 222.5h-7M879 240.5h11M1749 240.5h-11M879 258.5h7M1749 258.5h-7M879 276.5h7M1749 276.5h-7M879 294.5h7M1749 294.5h-7M879 312.5h7M1749 312.5h-7M879 330.5h11M1749 330.5h-11M879 348.5h7M1749 348.5h-7M879 366.5h7M1749 366.5h-7M879 384.5h7M1749 384.5h-7M879 402.5h7M1749 402.5h-7M879 420.5h11M1749 420.5h-11M879 438.5h7M1749 438.5h-7M879 456.5h7M1749 456.5h-7M879 474.5h7M1749 474.5h-7M879 492.5h7M1749 492.5h-7" stroke="#b4b4b4" stroke-width="1"/><rect x="1043" y="57" width="9" height="451" fill="#121212"/><line x1="1047.5" y1="86" x2="1047.5" y2="507" stroke="#f4f4f4" stroke-width="1.3"/><path d="M1058 125.5 H1398.5 V191.5 H1749" fill="none" stroke="#ee1c1c" stroke-width="1.3" stroke-dasharray="9 6"/></svg>
<div style="position:absolute;left:764.6px;width:400px;text-align:center;top:495px;font-size:13px;line-height:13px;color:#b8b8b8;font-weight:normal;white-space:nowrap;"><span style="background:#000;padding:0 1px">1 kHz</span></div>
<div style="position:absolute;left:907.3px;width:400px;text-align:center;top:495px;font-size:13px;line-height:13px;color:#b8b8b8;font-weight:normal;white-space:nowrap;"><span style="background:#000;padding:0 1px">10 kHz</span></div>
<div style="position:absolute;left:1050px;width:400px;text-align:center;top:495px;font-size:13px;line-height:13px;color:#b8b8b8;font-weight:normal;white-space:nowrap;"><span style="background:#000;padding:0 1px">100 kHz</span></div>
<div style="position:absolute;left:1192.7px;width:400px;text-align:center;top:495px;font-size:13px;line-height:13px;color:#b8b8b8;font-weight:normal;white-space:nowrap;"><span style="background:#000;padding:0 1px">1 MHz</span></div>
<div style="position:absolute;left:1335.4px;width:400px;text-align:center;top:495px;font-size:13px;line-height:13px;color:#b8b8b8;font-weight:normal;white-space:nowrap;"><span style="background:#000;padding:0 1px">10 MHz</span></div>
<div style="position:absolute;left:1478.1px;width:400px;text-align:center;top:495px;font-size:13px;line-height:13px;color:#b8b8b8;font-weight:normal;white-space:nowrap;"><span style="background:#000;padding:0 1px">100 MHz</span></div>
<svg style="left:879px;top:57px" width="870" height="451" viewBox="879 57 870 451"><path d="M879.5 57 L900.9 250 L922.6 448.2 L934.7 448.9 L947.4 448.9 L966 426 L979.3 418.3 L990.1 469.4 L999 446.5 L1008.2 470.6 L1015.5 461 L1022.7 411.6 L1027.2 389.8 L1033.3 387.3 L1038.1 370.5 L1042.9 329.5 L1046.5 274.1 L1048.4 268 L1051.3 272.9 L1056.1 370.5 L1058.6 409 L1062.2 389.8 L1064.6 394.6 L1070.6 454.8 L1075.9 423.5 L1078.6 488.6 L1081.6 403 L1085.5 390.5 L1087.6 415.7 L1089.5 370 L1092.3 301.8 L1095 368.4 L1095.8 407.8 L1097.4 393.6 L1101.3 404.7 L1102.9 474 L1103.7 502.5 L1104.9 445.7 L1107.6 456.7 L1110.8 415.7 L1114.7 407.8 L1117.1 348.7 L1119.4 412.6 L1121.8 426.8 L1125.7 470.9 L1127.3 502.5 L1128.1 478.8 L1128.6 479.5 L1129.2 475.4 L1129.7 456.7 L1130.5 479.4 L1131.2 465.1 L1132 456.7 L1132.8 453.5 L1133.6 443.1 L1134.4 418 L1134.9 429.6 L1135.5 451.6 L1136 453.6 L1136.8 485 L1137.6 486.5 L1138.3 479.4 L1139.1 448.8 L1139.6 459.4 L1140.2 479.5 L1140.7 489.8 L1141.2 482.9 L1141.8 501.6 L1142.3 478.8 L1142.8 503.7 L1143.4 492.9 L1143.9 507 L1144.4 507 L1145 492.1 L1145.5 448.8 L1146 465.7 L1146.5 467.1 L1147 456.7 L1147.5 435.1 L1148.1 410.2 L1148.6 395.2 L1149.1 418.7 L1149.7 417.3 L1150.2 434.6 L1150.7 431.9 L1151.3 430.9 L1151.8 426.8 L1152.3 424.9 L1152.8 441.4 L1153.3 436.2 L1153.8 467.5 L1154.4 503.5 L1154.9 507 L1155.7 494 L1156.5 474.7 L1157.3 437.8 L1158.3 428.1 L1159.4 413.9 L1160.4 380.2 L1160.9 406.5 L1161.5 419.1 L1162 434.6 L1162.5 472.7 L1163.1 485.7 L1163.6 474 L1164.4 500.4 L1165.2 502.6 L1166 493 L1166.8 444.1 L1167.7 435.5 L1168.7 420.5 L1169.6 407 L1170.2 425.5 L1170.9 434.2 L1171.5 453.6 L1172.5 485.6 L1173.6 488.4 L1174.6 496.2 L1175.5 460 L1176.3 490 L1177 458.3 L1177.5 484.8 L1178.1 476.9 L1178.6 477.2 L1179.5 465 L1180 488 L1180.4 483.9 L1180.9 463 L1181.4 471.7 L1182 492.8 L1182.5 507 L1183.5 450 L1184 467.6 L1184.4 449.4 L1184.9 436.2 L1186 470 L1186.4 486.8 L1186.9 461.2 L1187.3 447.3 L1187.8 463.5 L1188.3 500.6 L1188.8 507 L1189.2 507 L1189.6 478 L1190 460 L1190.6 446.4 L1191.1 443.7 L1191.7 429.1 L1192.5 480 L1193.6 470.9 L1194.5 500 L1195 507 L1195.4 499.2 L1195.9 472.5 L1196.4 481.7 L1197 497.1 L1197.5 507 L1198.3 498.9 L1199.1 492.5 L1199.9 491.4 L1200.7 507 L1201.4 501.3 L1202.2 507 L1202.6 507 L1203.1 506.9 L1203.5 495 L1204.6 480.4 L1205.5 500 L1206 492.8 L1206.5 502.6 L1207 478.8 L1207.7 474 L1208.3 487 L1209 470.1 L1210 495 L1210.6 496.6 L1211.1 507 L1211.7 507 L1212.2 499.5 L1212.8 493.2 L1213.3 482.7 L1214.1 507 L1214.8 507 L1215.6 507 L1216.7 507 L1217.7 507 L1218.8 502.5 L1219.2 504.5 L1219.6 507 L1220 507 L1220.7 507 L1221.3 507 L1222 499.3 L1223 507 L1223.7 499.2 L1224.4 507 L1225.1 492.2 L1226 507 L1226.8 506.6 L1227.5 507 L1228.3 504 L1229.6 507 L1230.9 507 L1232.2 507 L1234 507 L1235.9 501.3 L1237.7 504 L1238.2 501.8 L1238.8 507 L1239.3 507" fill="none" stroke="#f39a2e" stroke-width="1.1" stroke-linejoin="round" /><path d="M1438.5 507V418M1481.5 507V437M1506.5 507V482" stroke="#f39a2e" stroke-width="1.2"/><path d="M1436 507V500h3V507M1479 507V502h3V507" fill="#f39a2e"/><circle cx="1047.5" cy="268.5" r="4" fill="none" stroke="#d0d0d0" stroke-width="1.2"/><path d="M1039.5 260.5l4 4M1055.5 260.5l-4 4M1039.5 276.5l4 -4M1055.5 276.5l-4 -4" stroke="#d0d0d0" stroke-width="1.2"/><rect x="1716" y="58" width="26" height="29" rx="4" fill="#3a3a3a"/><ellipse cx="1728" cy="72" rx="10.5" ry="14" fill="#2a88d2"/><path d="M1708 63 H1740 Q1742 63 1742 65 V97 Z" fill="#4c4c4c" stroke="#000" stroke-width="1"/><circle cx="1735.5" cy="69.5" r="4.3" fill="none" stroke="#b8b8b8" stroke-width="1.8"/><path d="M1732.3 72.7 L1726.5 78.5" stroke="#b8b8b8" stroke-width="2.6" stroke-linecap="round"/><rect x="1742" y="57" width="7" height="30" rx="3" fill="#d08030"/></svg>
<div style="position:absolute;left:1014px;top:57px;width:67px;height:30px;background:#3a3a3a;border-radius:4px;"></div>
<div style="position:absolute;left:1014px;top:57px;width:42px;height:30px;background:#d58430;border-radius:4px;color:#1e1406;font-size:21px;line-height:30px;text-align:center;">M1</div>
<div style="position:absolute;left:1057px;top:58px;width:21px;height:28px;background:#2b87d1;border-radius:11px;color:#eaf2ff;font-size:20px;line-height:28px;text-align:center;">A</div>
<div style="position:absolute;right:172px;top:143.5px;font-size:13px;line-height:13px;color:#b8b8b8;font-weight:normal;white-space:nowrap;background:#000;padding:0 0 0 2px;">0 dBm</div>
<div style="position:absolute;right:172px;top:233.5px;font-size:13px;line-height:13px;color:#b8b8b8;font-weight:normal;white-space:nowrap;background:#000;padding:0 0 0 2px;">-20 dBm</div>
<div style="position:absolute;right:172px;top:323.5px;font-size:13px;line-height:13px;color:#b8b8b8;font-weight:normal;white-space:nowrap;background:#000;padding:0 0 0 2px;">-40 dBm</div>
<div style="position:absolute;right:172px;top:413.5px;font-size:13px;line-height:13px;color:#b8b8b8;font-weight:normal;white-space:nowrap;background:#000;padding:0 0 0 2px;">-60 dBm</div>
<div style="position:absolute;left:879px;top:95px;width:179px;height:60px;background:rgba(60,60,60,0.84);border-radius:5px;"></div><div style="position:absolute;left:883px;top:100px;font-size:22px;line-height:26px;color:#e8e8e8;white-space:nowrap;">X: 3.816 kHz</div><div style="position:absolute;left:883px;top:126px;font-size:22px;line-height:26px;color:#e8e8e8;white-space:nowrap;">Y: -26.408 dBm</div>
<div style="position:absolute;left:1158px;top:95px;width:479px;height:62px;background:rgba(60,60,60,0.84);border-radius:5px;"></div><div style="position:absolute;left:1161px;top:100px;font-size:22px;line-height:26px;color:#e8e8e8;white-space:nowrap;">ΔX: 312.496 MHz</div><div style="position:absolute;left:1161px;top:126px;font-size:22px;line-height:26px;color:#e8e8e8;white-space:nowrap;">ΔY: 139.456 dBm</div>
<div style="position:absolute;left:1372px;top:100px;font-size:22px;line-height:22px;color:#e8e8e8;font-weight:normal;white-space:nowrap;line-height:26px;">1/ΔX: 3.20 ns</div>
<div style="position:absolute;left:1361px;top:126px;font-size:22px;line-height:22px;color:#e8e8e8;font-weight:normal;white-space:nowrap;line-height:26px;">ΔY/ΔX: 446.26 ndBm/Hz</div>
<div style="position:absolute;left:1569px;top:161px;width:179px;height:59px;background:rgba(60,60,60,0.84);border-radius:5px;"></div><div style="position:absolute;left:1573px;top:165px;font-size:22px;line-height:26px;color:#e8e8e8;white-space:nowrap;">X: 312.500 MHz</div><div style="position:absolute;left:1573px;top:191px;font-size:22px;line-height:26px;color:#e8e8e8;white-space:nowrap;">Y: -165.863 dBm</div>
<svg style="left:3px;top:539px" width="870" height="451" viewBox="3 539 870 451"><line x1="14.5" y1="552" x2="14.5" y2="978" stroke="#5a5a5a" stroke-width="1" stroke-dasharray="1 4"/><line x1="32.5" y1="552" x2="32.5" y2="978" stroke="#5a5a5a" stroke-width="1" stroke-dasharray="1 4"/><line x1="45.5" y1="552" x2="45.5" y2="978" stroke="#5a5a5a" stroke-width="1" stroke-dasharray="1 4"/><line x1="57.5" y1="552" x2="57.5" y2="978" stroke="#5a5a5a" stroke-width="1" stroke-dasharray="1 4"/><line x1="66.5" y1="552" x2="66.5" y2="978" stroke="#5a5a5a" stroke-width="1" stroke-dasharray="1 4"/><line x1="75.5" y1="552" x2="75.5" y2="978" stroke="#5a5a5a" stroke-width="1" stroke-dasharray="1 4"/><line x1="82.5" y1="552" x2="82.5" y2="978" stroke="#5a5a5a" stroke-width="1" stroke-dasharray="1 4"/><line x1="88.5" y1="552" x2="88.5" y2="978" stroke="#cfcfcf" stroke-width="1" stroke-dasharray="1 4"/><line x1="131.5" y1="552" x2="131.5" y2="978" stroke="#5a5a5a" stroke-width="1" stroke-dasharray="1 4"/><line x1="156.5" y1="552" x2="156.5" y2="978" stroke="#5a5a5a" stroke-width="1" stroke-dasharray="1 4"/><line x1="174.5" y1="552" x2="174.5" y2="978" stroke="#5a5a5a" stroke-width="1" stroke-dasharray="1 4"/><line x1="188.5" y1="552" x2="188.5" y2="978" stroke="#5a5a5a" stroke-width="1" stroke-dasharray="1 4"/><line x1="199.5" y1="552" x2="199.5" y2="978" stroke="#5a5a5a" stroke-width="1" stroke-dasharray="1 4"/><line x1="209.5" y1="552" x2="209.5" y2="978" stroke="#5a5a5a" stroke-width="1" stroke-dasharray="1 4"/><line x1="217.5" y1="552" x2="217.5" y2="978" stroke="#5a5a5a" stroke-width="1" stroke-dasharray="1 4"/><line x1="225.5" y1="552" x2="225.5" y2="978" stroke="#5a5a5a" stroke-width="1" stroke-dasharray="1 4"/><line x1="231.5" y1="552" x2="231.5" y2="978" stroke="#cfcfcf" stroke-width="1" stroke-dasharray="1 4"/><line x1="274.5" y1="552" x2="274.5" y2="978" stroke="#5a5a5a" stroke-width="1" stroke-dasharray="1 4"/><line x1="299.5" y1="552" x2="299.5" y2="978" stroke="#5a5a5a" stroke-width="1" stroke-dasharray="1 4"/><line x1="317.5" y1="552" x2="317.5" y2="978" stroke="#5a5a5a" stroke-width="1" stroke-dasharray="1 4"/><line x1="331.5" y1="552" x2="331.5" y2="978" stroke="#5a5a5a" stroke-width="1" stroke-dasharray="1 4"/><line x1="342.5" y1="552" x2="342.5" y2="978" stroke="#5a5a5a" stroke-width="1" stroke-dasharray="1 4"/><line x1="352.5" y1="552" x2="352.5" y2="978" stroke="#5a5a5a" stroke-width="1" stroke-dasharray="1 4"/><line x1="360.5" y1="552" x2="360.5" y2="978" stroke="#5a5a5a" stroke-width="1" stroke-dasharray="1 4"/><line x1="367.5" y1="552" x2="367.5" y2="978" stroke="#5a5a5a" stroke-width="1" stroke-dasharray="1 4"/><line x1="374.5" y1="552" x2="374.5" y2="978" stroke="#cfcfcf" stroke-width="1" stroke-dasharray="1 4"/><line x1="417.5" y1="552" x2="417.5" y2="978" stroke="#5a5a5a" stroke-width="1" stroke-dasharray="1 4"/><line x1="442.5" y1="552" x2="442.5" y2="978" stroke="#5a5a5a" stroke-width="1" stroke-dasharray="1 4"/><line x1="460.5" y1="552" x2="460.5" y2="978" stroke="#5a5a5a" stroke-width="1" stroke-dasharray="1 4"/><line x1="474.5" y1="552" x2="474.5" y2="978" stroke="#5a5a5a" stroke-width="1" stroke-dasharray="1 4"/><line x1="485.5" y1="552" x2="485.5" y2="978" stroke="#5a5a5a" stroke-width="1" stroke-dasharray="1 4"/><line x1="494.5" y1="552" x2="494.5" y2="978" stroke="#5a5a5a" stroke-width="1" stroke-dasharray="1 4"/><line x1="503.5" y1="552" x2="503.5" y2="978" stroke="#5a5a5a" stroke-width="1" stroke-dasharray="1 4"/><line x1="510.5" y1="552" x2="510.5" y2="978" stroke="#5a5a5a" stroke-width="1" stroke-dasharray="1 4"/><line x1="516.5" y1="552" x2="516.5" y2="978" stroke="#cfcfcf" stroke-width="1" stroke-dasharray="1 4"/><line x1="559.5" y1="552" x2="559.5" y2="978" stroke="#5a5a5a" stroke-width="1" stroke-dasharray="1 4"/><line x1="585.5" y1="552" x2="585.5" y2="978" stroke="#5a5a5a" stroke-width="1" stroke-dasharray="1 4"/><line x1="602.5" y1="552" x2="602.5" y2="978" stroke="#5a5a5a" stroke-width="1" stroke-dasharray="1 4"/><line x1="616.5" y1="552" x2="616.5" y2="978" stroke="#5a5a5a" stroke-width="1" stroke-dasharray="1 4"/><line x1="628.5" y1="552" x2="628.5" y2="978" stroke="#5a5a5a" stroke-width="1" stroke-dasharray="1 4"/><line x1="637.5" y1="552" x2="637.5" y2="978" stroke="#5a5a5a" stroke-width="1" stroke-dasharray="1 4"/><line x1="645.5" y1="552" x2="645.5" y2="978" stroke="#5a5a5a" stroke-width="1" stroke-dasharray="1 4"/><line x1="653.5" y1="552" x2="653.5" y2="978" stroke="#5a5a5a" stroke-width="1" stroke-dasharray="1 4"/><line x1="659.5" y1="552" x2="659.5" y2="978" stroke="#cfcfcf" stroke-width="1" stroke-dasharray="1 4"/><line x1="702.5" y1="552" x2="702.5" y2="978" stroke="#5a5a5a" stroke-width="1" stroke-dasharray="1 4"/><line x1="727.5" y1="552" x2="727.5" y2="978" stroke="#5a5a5a" stroke-width="1" stroke-dasharray="1 4"/><line x1="745.5" y1="552" x2="745.5" y2="978" stroke="#5a5a5a" stroke-width="1" stroke-dasharray="1 4"/><line x1="759.5" y1="552" x2="759.5" y2="978" stroke="#5a5a5a" stroke-width="1" stroke-dasharray="1 4"/><line x1="770.5" y1="552" x2="770.5" y2="978" stroke="#5a5a5a" stroke-width="1" stroke-dasharray="1 4"/><line x1="780.5" y1="552" x2="780.5" y2="978" stroke="#5a5a5a" stroke-width="1" stroke-dasharray="1 4"/><line x1="788.5" y1="552" x2="788.5" y2="978" stroke="#5a5a5a" stroke-width="1" stroke-dasharray="1 4"/><line x1="795.5" y1="552" x2="795.5" y2="978" stroke="#5a5a5a" stroke-width="1" stroke-dasharray="1 4"/><line x1="802.5" y1="552" x2="802.5" y2="978" stroke="#cfcfcf" stroke-width="1" stroke-dasharray="1 4"/><line x1="845.5" y1="552" x2="845.5" y2="978" stroke="#5a5a5a" stroke-width="1" stroke-dasharray="1 4"/><line x1="870.5" y1="552" x2="870.5" y2="978" stroke="#5a5a5a" stroke-width="1" stroke-dasharray="1 4"/><path d="M14 558h1v1h-1zM32 558h1v1h-1zM45 558h1v1h-1zM57 558h1v1h-1zM66 558h1v1h-1zM75 558h1v1h-1zM82 558h1v1h-1zM88 558h1v1h-1zM131 558h1v1h-1zM156 558h1v1h-1zM174 558h1v1h-1zM188 558h1v1h-1zM199 558h1v1h-1zM209 558h1v1h-1zM217 558h1v1h-1zM225 558h1v1h-1zM231 558h1v1h-1zM274 558h1v1h-1zM299 558h1v1h-1zM317 558h1v1h-1zM331 558h1v1h-1zM342 558h1v1h-1zM352 558h1v1h-1zM360 558h1v1h-1zM367 558h1v1h-1zM374 558h1v1h-1zM417 558h1v1h-1zM442 558h1v1h-1zM460 558h1v1h-1zM474 558h1v1h-1zM485 558h1v1h-1zM494 558h1v1h-1zM503 558h1v1h-1zM510 558h1v1h-1zM516 558h1v1h-1zM559 558h1v1h-1zM585 558h1v1h-1zM602 558h1v1h-1zM616 558h1v1h-1zM628 558h1v1h-1zM637 558h1v1h-1zM645 558h1v1h-1zM653 558h1v1h-1zM659 558h1v1h-1zM702 558h1v1h-1zM727 558h1v1h-1zM745 558h1v1h-1zM759 558h1v1h-1zM770 558h1v1h-1zM780 558h1v1h-1zM788 558h1v1h-1zM795 558h1v1h-1zM802 558h1v1h-1zM845 558h1v1h-1zM870 558h1v1h-1zM14 648h1v1h-1zM32 648h1v1h-1zM45 648h1v1h-1zM57 648h1v1h-1zM66 648h1v1h-1zM75 648h1v1h-1zM82 648h1v1h-1zM88 648h1v1h-1zM131 648h1v1h-1zM156 648h1v1h-1zM174 648h1v1h-1zM188 648h1v1h-1zM199 648h1v1h-1zM209 648h1v1h-1zM217 648h1v1h-1zM225 648h1v1h-1zM231 648h1v1h-1zM274 648h1v1h-1zM299 648h1v1h-1zM317 648h1v1h-1zM331 648h1v1h-1zM342 648h1v1h-1zM352 648h1v1h-1zM360 648h1v1h-1zM367 648h1v1h-1zM374 648h1v1h-1zM417 648h1v1h-1zM442 648h1v1h-1zM460 648h1v1h-1zM474 648h1v1h-1zM485 648h1v1h-1zM494 648h1v1h-1zM503 648h1v1h-1zM510 648h1v1h-1zM516 648h1v1h-1zM559 648h1v1h-1zM585 648h1v1h-1zM602 648h1v1h-1zM616 648h1v1h-1zM628 648h1v1h-1zM637 648h1v1h-1zM645 648h1v1h-1zM653 648h1v1h-1zM659 648h1v1h-1zM702 648h1v1h-1zM727 648h1v1h-1zM745 648h1v1h-1zM759 648h1v1h-1zM770 648h1v1h-1zM780 648h1v1h-1zM788 648h1v1h-1zM795 648h1v1h-1zM802 648h1v1h-1zM845 648h1v1h-1zM870 648h1v1h-1zM14 738h1v1h-1zM32 738h1v1h-1zM45 738h1v1h-1zM57 738h1v1h-1zM66 738h1v1h-1zM75 738h1v1h-1zM82 738h1v1h-1zM88 738h1v1h-1zM131 738h1v1h-1zM156 738h1v1h-1zM174 738h1v1h-1zM188 738h1v1h-1zM199 738h1v1h-1zM209 738h1v1h-1zM217 738h1v1h-1zM225 738h1v1h-1zM231 738h1v1h-1zM274 738h1v1h-1zM299 738h1v1h-1zM317 738h1v1h-1zM331 738h1v1h-1zM342 738h1v1h-1zM352 738h1v1h-1zM360 738h1v1h-1zM367 738h1v1h-1zM374 738h1v1h-1zM417 738h1v1h-1zM442 738h1v1h-1zM460 738h1v1h-1zM474 738h1v1h-1zM485 738h1v1h-1zM494 738h1v1h-1zM503 738h1v1h-1zM510 738h1v1h-1zM516 738h1v1h-1zM559 738h1v1h-1zM585 738h1v1h-1zM602 738h1v1h-1zM616 738h1v1h-1zM628 738h1v1h-1zM637 738h1v1h-1zM645 738h1v1h-1zM653 738h1v1h-1zM659 738h1v1h-1zM702 738h1v1h-1zM727 738h1v1h-1zM745 738h1v1h-1zM759 738h1v1h-1zM770 738h1v1h-1zM780 738h1v1h-1zM788 738h1v1h-1zM795 738h1v1h-1zM802 738h1v1h-1zM845 738h1v1h-1zM870 738h1v1h-1zM14 828h1v1h-1zM32 828h1v1h-1zM45 828h1v1h-1zM57 828h1v1h-1zM66 828h1v1h-1zM75 828h1v1h-1zM82 828h1v1h-1zM88 828h1v1h-1zM131 828h1v1h-1zM156 828h1v1h-1zM174 828h1v1h-1zM188 828h1v1h-1zM199 828h1v1h-1zM209 828h1v1h-1zM217 828h1v1h-1zM225 828h1v1h-1zM231 828h1v1h-1zM274 828h1v1h-1zM299 828h1v1h-1zM317 828h1v1h-1zM331 828h1v1h-1zM342 828h1v1h-1zM352 828h1v1h-1zM360 828h1v1h-1zM367 828h1v1h-1zM374 828h1v1h-1zM417 828h1v1h-1zM442 828h1v1h-1zM460 828h1v1h-1zM474 828h1v1h-1zM485 828h1v1h-1zM494 828h1v1h-1zM503 828h1v1h-1zM510 828h1v1h-1zM516 828h1v1h-1zM559 828h1v1h-1zM585 828h1v1h-1zM602 828h1v1h-1zM616 828h1v1h-1zM628 828h1v1h-1zM637 828h1v1h-1zM645 828h1v1h-1zM653 828h1v1h-1zM659 828h1v1h-1zM702 828h1v1h-1zM727 828h1v1h-1zM745 828h1v1h-1zM759 828h1v1h-1zM770 828h1v1h-1zM780 828h1v1h-1zM788 828h1v1h-1zM795 828h1v1h-1zM802 828h1v1h-1zM845 828h1v1h-1zM870 828h1v1h-1zM14 918h1v1h-1zM32 918h1v1h-1zM45 918h1v1h-1zM57 918h1v1h-1zM66 918h1v1h-1zM75 918h1v1h-1zM82 918h1v1h-1zM88 918h1v1h-1zM131 918h1v1h-1zM156 918h1v1h-1zM174 918h1v1h-1zM188 918h1v1h-1zM199 918h1v1h-1zM209 918h1v1h-1zM217 918h1v1h-1zM225 918h1v1h-1zM231 918h1v1h-1zM274 918h1v1h-1zM299 918h1v1h-1zM317 918h1v1h-1zM331 918h1v1h-1zM342 918h1v1h-1zM352 918h1v1h-1zM360 918h1v1h-1zM367 918h1v1h-1zM374 918h1v1h-1zM417 918h1v1h-1zM442 918h1v1h-1zM460 918h1v1h-1zM474 918h1v1h-1zM485 918h1v1h-1zM494 918h1v1h-1zM503 918h1v1h-1zM510 918h1v1h-1zM516 918h1v1h-1zM559 918h1v1h-1zM585 918h1v1h-1zM602 918h1v1h-1zM616 918h1v1h-1zM628 918h1v1h-1zM637 918h1v1h-1zM645 918h1v1h-1zM653 918h1v1h-1zM659 918h1v1h-1zM702 918h1v1h-1zM727 918h1v1h-1zM745 918h1v1h-1zM759 918h1v1h-1zM770 918h1v1h-1zM780 918h1v1h-1zM788 918h1v1h-1zM795 918h1v1h-1zM802 918h1v1h-1zM845 918h1v1h-1zM870 918h1v1h-1z" fill="#d8d8d8"/><path d="M14.5 539v5M14.5 990v-5M32.5 539v5M32.5 990v-5M45.5 539v5M45.5 990v-5M57.5 539v5M57.5 990v-5M66.5 539v5M66.5 990v-5M75.5 539v5M75.5 990v-5M82.5 539v5M82.5 990v-5M88.5 539v10M88.5 990v-10M131.5 539v5M131.5 990v-5M156.5 539v5M156.5 990v-5M174.5 539v5M174.5 990v-5M188.5 539v5M188.5 990v-5M199.5 539v5M199.5 990v-5M209.5 539v5M209.5 990v-5M217.5 539v5M217.5 990v-5M225.5 539v5M225.5 990v-5M231.5 539v10M231.5 990v-10M274.5 539v5M274.5 990v-5M299.5 539v5M299.5 990v-5M317.5 539v5M317.5 990v-5M331.5 539v5M331.5 990v-5M342.5 539v5M342.5 990v-5M352.5 539v5M352.5 990v-5M360.5 539v5M360.5 990v-5M367.5 539v5M367.5 990v-5M374.5 539v10M374.5 990v-10M417.5 539v5M417.5 990v-5M442.5 539v5M442.5 990v-5M460.5 539v5M460.5 990v-5M474.5 539v5M474.5 990v-5M485.5 539v5M485.5 990v-5M494.5 539v5M494.5 990v-5M503.5 539v5M503.5 990v-5M510.5 539v5M510.5 990v-5M516.5 539v10M516.5 990v-10M559.5 539v5M559.5 990v-5M585.5 539v5M585.5 990v-5M602.5 539v5M602.5 990v-5M616.5 539v5M616.5 990v-5M628.5 539v5M628.5 990v-5M637.5 539v5M637.5 990v-5M645.5 539v5M645.5 990v-5M653.5 539v5M653.5 990v-5M659.5 539v10M659.5 990v-10M702.5 539v5M702.5 990v-5M727.5 539v5M727.5 990v-5M745.5 539v5M745.5 990v-5M759.5 539v5M759.5 990v-5M770.5 539v5M770.5 990v-5M780.5 539v5M780.5 990v-5M788.5 539v5M788.5 990v-5M795.5 539v5M795.5 990v-5M802.5 539v10M802.5 990v-10M845.5 539v5M845.5 990v-5M870.5 539v5M870.5 990v-5" stroke="#b4b4b4" stroke-width="1"/><path d="M3 540.5h7M873 540.5h-7M3 558.5h11M873 558.5h-11M3 576.5h7M873 576.5h-7M3 594.5h7M873 594.5h-7M3 612.5h7M873 612.5h-7M3 630.5h7M873 630.5h-7M3 648.5h11M873 648.5h-11M3 666.5h7M873 666.5h-7M3 684.5h7M873 684.5h-7M3 702.5h7M873 702.5h-7M3 720.5h7M873 720.5h-7M3 738.5h11M873 738.5h-11M3 756.5h7M873 756.5h-7M3 774.5h7M873 774.5h-7M3 792.5h7M873 792.5h-7M3 810.5h7M873 810.5h-7M3 828.5h11M873 828.5h-11M3 846.5h7M873 846.5h-7M3 864.5h7M873 864.5h-7M3 882.5h7M873 882.5h-7M3 900.5h7M873 900.5h-7M3 918.5h11M873 918.5h-11M3 936.5h7M873 936.5h-7M3 954.5h7M873 954.5h-7M3 972.5h7M873 972.5h-7M3 990.5h7M873 990.5h-7" stroke="#b4b4b4" stroke-width="1"/><rect x="84" y="539" width="9" height="451" fill="#121212"/><line x1="88.5" y1="569" x2="88.5" y2="990" stroke="#b8b8b8" stroke-width="1.2"/><rect x="858" y="539" width="9" height="451" fill="#121212"/><line x1="862.5" y1="539" x2="862.5" y2="990" stroke="#a8a8a8" stroke-width="1"/><path d="M89 607.5 H236 M475.5 639 V673.5 H693" fill="none" stroke="#bcbcbc" stroke-width="1" stroke-dasharray="9 6"/><path d="M3.7 792.5 L46.3 910 L58 760 L63.8 700 L68.3 637.2 L87.6 571.2 L92 571.2 L103.2 592 L105.4 637.2 L107.6 700 L109.4 760 L111.4 840 L114.4 914 L122.6 865 L131.9 846.3 L146.4 927.7 L157.2 865.1 L162.7 921.4 L167.2 896.4 L175.2 896.4 L178.4 964 L186.4 900 L191.4 925 L200.2 878.9 L209 951.4 L219.7 878.9 L223.5 951.4 L231.5 891.4 L240.2 967.7 L247.7 873.9 L256.5 969 L260.3 910 L261.6 924.7 L262.8 940 L264.3 932.9 L265.8 897.6 L267.4 921.2 L269 935 L270.2 925.6 L271.5 900 L272.8 937.2 L274 917.7 L275.3 980 L276.6 974.3 L277.8 950 L280.3 979.3 L282.8 982.7 L284.1 972.4 L285.3 912.7 L287.1 896.2 L289 885 L290.2 893.7 L291.5 910 L292.8 927.6 L294 892.6 L295.2 961.5 L296.5 985 L297.8 937.5 L299 890 L300.9 920.1 L302.8 955 L305.1 947.1 L307.3 900 L308.8 970.1 L310.3 985 L312.8 954.2 L315.3 927.7 L317.1 979.4 L319 975 L320.9 967.8 L322.8 910 L325.3 910.4 L327.8 882.6 L329.1 903.2 L330.3 910 L332.8 935.5 L335.3 972.7 L337.1 934.2 L339 912.7 L340.9 977.4 L342.8 985" fill="none" stroke="#7e33a6" stroke-width="1.1" stroke-linejoin="round" /><path d="M300 990 L300 990 L301 990 L302 990 L303 990 L304 990 L305 986.1 L306 989.8 L307 990 L308 987.8 L309 984.8 L310 990 L311 990 L312 990 L313 984.6 L314 990 L315 983.5 L316 985.6 L317 983.9 L318 990 L319 981.4 L320 987.5 L321 984.2 L322 990 L323 981.5 L324 989.8 L325 988.7 L326 990 L327 986.1 L328 990 L329 985 L330 985.2 L331 978.5 L332 981.6 L333 985.5 L334 990 L335 984.3 L336 978.1 L337 979.3 L338 983.8 L339 978.5 L340 979.4 L341 979.5 L342 973.8 L343 973.2 L344 982.7 L345 975 L346 981.2 L347 971.9 L348 981 L349 972.9 L350 972.9 L351 969.5 L352 980.5 L353 970.3 L354 971.7 L355 968.3 L356 977.7 L357 965.1 L358 972.8 L359 962 L360 971 L361 963.2 L362 961.8 L363 962.4 L364 975.9 L365 964.8 L366 971.7 L367 959.9 L368 971.8 L369 961.8 L370 967 L371 964.4 L372 961.3 L373 963.5 L374 960.5 L375 962 L376 967.5 L377 957.8 L378 970.3 L379 959.8 L380 968.4 L381 963.4 L382 962 L383 953.7 L384 962.1 L385 959.7 L386 959.9 L387 954 L388 970.5 L389 958.6 L390 963.1 L391 960.9 L392 961.2 L393 958.7 L394 959.2 L395 956.3 L396 968.9 L397 961.1 L398 970.1 L399 955.8 L400 965.3 L401 955 L402 957.9 L403 956.6 L404 968.9 L405 959.9 L406 966.7 L407 960.7 L408 959.5 L409 952.6 L410 962 L411 953.4 L412 958 L413 954.6 L414 964.3 L415 955.1 L416 959.1 L417 958.4 L418 969.6 L419 954.2 L420 954.8 L421 949.8 L422 967.3 L423 949.7 L424 964.5 L425 954.7 L426 957.9 L427 956.9 L428 953.3 L429 950.4 L430 960.3 L431 949.2 L432 966.3 L433 951.4 L434 955.3 L435 949.5 L436 963.1 L437 953.5 L438 963.1 L439 955.6 L440 965.9 L441 958.6 L442 964 L443 951 L444 960.6 L445 950.8 L446 953.2 L447 953.7 L448 964.4 L449 950.8 L450 957.4 L451 952.5 L452 964.3 L453 954.5 L454 963.2 L455 957 L456 959.8 L457 957.5 L458 968.2 L459 950.7 L460 968.8 L461 957.2 L462 956.2 L463 954.7 L464 964.3 L465 959.4 L466 960.5 L467 956.2 L468 968.7 L469 958.7 L470 969.9 L471 955.5 L472 965.4 L473 953.1 L474 966.7 L475 959.4 L476 965.6 L477 958.6 L478 958.9 L479 960.6 L480 971.4 L481 961.3 L482 964 L483 959.2 L484 960.3 L485 960.2 L486 968.6 L487 954.3 L488 956 L489 955 L490 963.3 L491 958 L492 962 L493 950.4 L494 966.9 L495 950.5 L496 966.5 L497 951.3 L498 958.8 L499 957.2 L500 955.4 L501 950.6 L502 961.2 L503 956.1 L504 966.1 L505 955.5 L506 967.6 L507 953.3 L508 967.4 L509 948.9 L510 955.5 L511 953.1 L512 956.3 L513 954.9 L514 961.7 L515 952.6 L516 964.7 L517 952.7 L518 955.9 L519 950.6 L520 964.2 L521 955.6 L522 953.8 L523 954.9 L524 965.8 L525 951.4 L526 959.2 L527 948 L528 958.4 L529 950.8 L530 959.3 L531 945.8 L532 964.9 L533 950.5 L534 955.6 L535 953.1 L536 958 L537 949.8 L538 959.8 L539 945.3 L540 957.2 L541 948.6 L542 963.6 L543 953.5 L544 952.4 L545 948.7 L546 950.2 L547 948.7 L548 961.6 L549 953.7 L550 956.5 L551 948.3 L552 952.3 L553 951.6 L554 964.4 L555 947.1 L556 962.4 L557 946.4 L558 953.4 L559 948.8 L560 961.7 L561 948.2 L562 952.8 L563 947.6 L564 945.3 L565 945.2 L566 942 L567 939.4 L568 940.5 L569 932.7 L570 941.5 L571 931.5 L572 935.3 L573 937.4 L574 976.5 L575 965.8 L576 971.7 L577 971 L578 979.2 L579 970.5 L580 983 L581 971.8 L582 983.6 L583 968.5 L584 982.2 L585 974.7 L586 985.3 L587 970.3 L588 976.4 L589 976.8 L590 975.3 L591 978 L592 986.5 L593 969.9 L594 976.6 L595 976.3 L596 977.3 L597 970.2 L598 986.6 L599 973.6 L600 986.2 L601 970.9 L602 980.2 L603 976.7 L604 974.3 L605 972.1 L606 985.1 L607 979.4 L608 989.9 L609 971.7 L610 982.7 L611 978.3 L612 982.9 L613 977.8 L614 978.1 L615 971.9 L616 977 L617 971.8 L618 984.3 L619 976.7 L620 984.8 L621 973.2 L622 978.7 L623 973.9 L624 989.3 L625 981.8 L626 990 L627 973 L628 977.1 L629 981.6 L630 983.6 L631 979.9 L632 981.5 L633 977 L634 984.6 L635 976.7 L636 986.1 L637 972.6 L638 987.7 L639 981 L640 979.5 L641 977.2 L642 988.5 L643 976.8 L644 979.9 L645 974.5 L646 985.1 L647 973.1 L648 990 L649 981.1 L650 988.4 L651 981.7 L652 987.2 L653 977.3 L654 986.9 L655 978.4 L656 990 L657 981.5 L658 981.6 L659 982.6 L660 989.5 L661 981.4 L662 990 L663 977.7 L664 990 L665 982.6 L666 988.9 L667 981.5 L668 990 L669 978 L670 989.6 L671 974.7 L672 983.5 L673 978.7 L674 978.2 L675 977.6 L676 988.2 L677 980.2 L678 981.7 L679 983.4 L680 988.7 L681 977.4 L682 988.6 L683 979.7 L684 986.5 L685 977.9 L686 990 L687 980.4 L688 989.2 L689 981.6 L690 990 L691 974.2 L692 987.8 L693 981.4 L694 982.1 L695 978 L696 978.8 L697 976 L698 984 L699 975 L700 982 L701 983.1 L702 986.8 L703 979.1 L704 990 L705 979.7 L706 990 L707 980.4 L708 990 L709 974.8 L710 987.6 L711 981.6 L712 978.7 L713 983.3 L714 980.6 L715 978.7 L716 980.7 L717 979 L718 987.8 L719 974.6 L720 990 L721 978.2 L722 986.3 L723 979.8 L724 983.7 L725 976.6 L726 988.2 L727 979.3 L728 982.2 L729 980.8 L730 982.3 L731 973.6 L732 981.4 L733 973.8 L734 979.9 L735 980.9 L736 983.5 L737 982.2 L738 989.1 L739 973.6 L740 990 L741 982.5 L742 978.2 L743 982 L744 983.8 L745 977.6 L746 990 L747 975.2 L748 985.1 L749 982 L750 988.2 L751 977.3 L752 990 L753 980.6 L754 986.1 L755 973.5 L756 986.3 L757 976.9 L758 979.5 L759 972.7 L760 984.6 L761 973.4 L762 983.2 L763 978.7 L764 983.3 L765 974.6 L766 985.2 L767 976 L768 988.2 L769 977.1 L770 990 L771 980.8 L772 986.7 L773 972.9 L774 975.9 L775 978.7 L776 985.9 L777 975.2 L778 978.3 L779 970.9 L780 982.7 L781 973 L782 980.4 L783 972.9 L784 982.2 L785 967.7 L786 973.4 L787 974.8 L788 983.3 L789 973 L790 968.5 L791 964 L792 971.4 L793 966.9 L794 976.2 L795 962.9 L796 974.1 L797 961.8 L798 966.1 L799 967.1 L800 972.7 L801 965.8 L802 969.1 L803 963.5 L804 965.7 L805 961.4 L806 973.5 L807 965.5 L808 961.9 L809 957.6 L810 972.9 L811 961.8 L812 971.5 L813 956.9 L814 965.2 L815 956.6 L816 965.2 L817 946.2 L818 951.2 L819 962.7 L820 978.2 L821 974.9 L822 985.7 L823 979.4 L824 981.4 L825 974.7 L826 977 L827 980.6 L828 977.5 L829 973.4 L830 986 L831 978.2 L832 988.8 L833 977.2 L834 990 L835 975.8 L836 982.8 L837 982.4 L838 981.5 L839 979.6 L840 990 L841 984.3 L842 986.3 L843 979.6 L844 988.3 L845 986.3 L846 989.2 L847 980.8 L848 990 L849 986 L850 990 L851 990 L852 990 L853 986 L854 990 L855 985.4 L856 990 L857 987 L858 990 L859 990 L860 990 L861 987.6 L862 990Z" fill="#6a2888" stroke="#6e2a8c" stroke-width="0.6"/><path d="M523.7 990V945.8M539.7 990V943.6M433.3 990V920.9M616.5 990V962.3M628.3 990V974.9M732.2 990V963.6M479.2 990V941.8M618.4 990V967.3M842.2 990V972.2M756.3 990V977.2M619.8 990V963.5M374.5 990V938.4M806.5 990V961.8M666.1 990V977.2M725.3 990V968.1M460.1 990V929M606.4 990V962.5M539 990V944.6M843.2 990V972.2M591.6 990V964.5M712.1 990V967.3M814.9 990V952.6M767.9 990V965.8M782.4 990V958.3M771.9 990V960.9M837.6 990V970.5M607.6 990V963.6M755.2 990V970.8M552.8 990V948.8M722.9 990V962M529 990V948.7M438.3 990V938.6M844 990V983.5M493.5 990V953.9M673.4 990V966M425.1 990V940.1M639.6 990V962.2M349.3 990V962.1M445.2 990V929.2M645.2 990V974.8M428 990V944.8M731.5 990V973.9M620.6 990V963M584.1 990V967.7M800.3 990V949.3M511.3 990V943.9M837.2 990V973.2M447.1 990V925.7M754.8 990V971.5M609.6 990V967.3M475.5 990V919.7M455.9 990V941.2M526.9 990V937.6M708 990V969.1M413.4 990V943.9M467.5 990V925.4M667.6 990V962M471.2 990V942.8M738.3 990V979.1M765.4 990V962.7M765.7 990V976.4M473.1 990V941.3M584.5 990V964.1M836.4 990V971M784.4 990V966.6M748.3 990V971.2M815.9 990V953.3M768 990V974M618 990V968M413.5 990V932.1M494.7 990V954.5M492 990V947.8M709 990V973.5M694.2 990V978.1M538.9 990V942.3M842.5 990V969M676.6 990V979.8M529.9 990V938.9M455.9 990V931.6M335.5 990V938.4M439.6 990V935.2M529.3 990V942M488 990V950.6M537.9 990V938.8M465.9 990V930.9M504.6 990V937.6M628.3 990V965.1M505.8 990V939.6M378.9 990V955.5M689.2 990V967.3M425.3 990V922.7M644.2 990V977.2M450.1 990V948.5M545.6 990V948.8M817.9 990V935.4M601.1 990V964M736.4 990V964.5M534.6 990V945.2M548.4 990V950.3M542.4 990V937.7M850.4 990V972.6M679.9 990V969M339.8 990V960.3M674.9 990V978.1M530.1 990V942.4M747.9 990V963.9M654.1 990V976.4M736.3 990V963M620.6 990V971.4M595.2 990V972.5M708.1 990V962.2M603.5 990V963M772.8 990V973M830.8 990V968M434.9 990V946.2M635.5 990V965.9M504.5 990V937.9M521.4 990V944.2M395.7 990V936.4M809.2 990V952.5M627.2 990V967.9M470.1 990V910.7M763.3 990V967.2M395 990V934.5M805.4 990V959.4M634 990V963.4M428.4 990V942.9M347 990V938.1M827.9 990V966.3M493.1 990V944M721 990V973.1M643.7 990V964.3M338.7 990V959.9M405.8 990V933.3M422.1 990V938.1M631.1 990V972.2M670.1 990V979.3M685.6 990V977.4M838.4 990V971.6M579.1 990V963.8M660.6 990V967.2M731.8 990V965.9M587.5 990V955.3M774.3 990V960.6M546.8 990V942.5M630 990V961.9M608.8 990V967M559.1 990V936.3M500 990V954.2M714.6 990V963.8M718 990V969.2M728.5 990V974.1M644.5 990V977.6M396 990V934.9M540.3 990V949.6M698.3 990V970.5M456.7 990V938.2M455 990V926.9M842.2 990V971.9M789.2 990V962.5M756.8 990V974.3M725.7 990V969.5M808.8 990V960.7M749.9 990V976.4M614.9 990V960M330.3 990V971.4M502.1 990V953.8M804.4 990V949.5M540.5 990V944.1M640.3 990V977.8M346.5 990V945.8M594.2 990V958M848 990V977.5M439.4 990V922M805.3 990V960.3M774.1 990V969.7M580.4 990V968.4M796.3 990V949.5M437.1 990V937.9M796.5 990V966.4M386.2 990V936.1M807.2 990V947.4M708 990V977.6M698.9 990V963.1M565.9 990V940.8M448.3 990V928.2M434.1 990V944.7M682.2 990V965.8M527.4 990V940M798.8 990V955.8M451.4 990V921.9M683.5 990V975M669.2 990V978.3M851 990V979.1M610 990V967.1M354 990V947.7M463 990V939.1M481.1 990V944M460.3 990V934.5M428.8 990V909.2M347.8 990V939.6M533.9 990V934.5M594.9 990V971.7M624.7 990V966.3M520.6 990V940.8M745 990V969.5M598 990V960.1M692.7 990V970.6M834.3 990V977.6M743.2 990V976M652.3 990V974.9M563.4 990V932.7M746.9 990V964.5M455 990V940M637.4 990V969.5M348.7 990V937.7M633.5 990V962.6M425.4 990V951.7M592.9 990V966.7M564.1 990V940.7M368 990V915M396.6 990V914M428 990V926M449 990V920M476.7 990V935M428.8 990V925M449.5 990V920M464.5 990V929M476.3 990V935M496.3 990V935M572.7 990V929M584.4 990V936.4M602.2 990V936.4M616.4 990V944M653.5 990V962.7M674.5 990V964M725.3 990V959M743.6 990V951.4M767.8 990V956.4M779.6 990V957.7M817.1 990V941.4" stroke="#6e2a8c" stroke-width="1"/><path d="M516.5 990V797M559.5 990V890M843.5 990V890M854.5 990V887" stroke="#8b35b0" stroke-width="1.1"/><circle cx="88.5" cy="570" r="4" fill="none" stroke="#d0d0d0" stroke-width="1.2"/><path d="M80.5 562l4 4M96.5 562l-4 4M80.5 578l4 -4M96.5 578l-4 -4" stroke="#d0d0d0" stroke-width="1.2"/><rect x="829" y="540" width="40" height="29" rx="4" fill="#3a3a3a"/><rect x="855" y="540" width="22" height="29" rx="4" fill="#6a2b88"/><path d="M836.5 553 V562 H843" fill="none" stroke="#e0e0e0" stroke-width="1.6"/><path d="M866 555 L869 565 L873 553" fill="none" stroke="#1a0a2a" stroke-width="1.6"/><path d="M832 546 H864 Q866 546 866 548 V580 Z" fill="#4c4c4c" stroke="#000" stroke-width="1"/><circle cx="859.5" cy="552.5" r="4.3" fill="none" stroke="#b8b8b8" stroke-width="1.8"/><path d="M856.3 555.7 L850.5 561.5" stroke="#b8b8b8" stroke-width="2.6" stroke-linecap="round"/></svg>
<div style="position:absolute;left:55px;top:539px;width:67px;height:30px;background:#3a3a3a;border-radius:4px;"></div>
<div style="position:absolute;left:55px;top:539px;width:42px;height:30px;background:#6a2b88;border-radius:4px;color:#1a0a2a;font-size:21px;line-height:30px;text-align:center;">M2</div>
<div style="position:absolute;left:99px;top:540px;font-size:20px;line-height:20px;color:#dcdcdc;font-weight:normal;white-space:nowrap;line-height:29px;">A</div>
<div style="position:absolute;right:1048px;top:640.4px;font-size:13px;line-height:13px;color:#b8b8b8;font-weight:normal;white-space:nowrap;background:#000;padding:0 0 0 2px;">-20 dBm</div>
<div style="position:absolute;right:1048px;top:730.4px;font-size:13px;line-height:13px;color:#b8b8b8;font-weight:normal;white-space:nowrap;background:#000;padding:0 0 0 2px;">-40 dBm</div>
<div style="position:absolute;right:1048px;top:820.4px;font-size:13px;line-height:13px;color:#b8b8b8;font-weight:normal;white-space:nowrap;background:#000;padding:0 0 0 2px;">-60 dBm</div>
<div style="position:absolute;right:1048px;top:910.4px;font-size:13px;line-height:13px;color:#b8b8b8;font-weight:normal;white-space:nowrap;background:#000;padding:0 0 0 2px;">-80 dBm</div>
<div style="position:absolute;left:-111.6px;width:400px;text-align:center;top:976px;font-size:13px;line-height:13px;color:#b8b8b8;font-weight:normal;white-space:nowrap;">1 kHz</div>
<div style="position:absolute;left:31.099999999999994px;width:400px;text-align:center;top:976px;font-size:13px;line-height:13px;color:#b8b8b8;font-weight:normal;white-space:nowrap;">10 kHz</div>
<div style="position:absolute;left:173.8px;width:400px;text-align:center;top:976px;font-size:13px;line-height:13px;color:#b8b8b8;font-weight:normal;white-space:nowrap;">100 kHz</div>
<div style="position:absolute;left:316.5px;width:400px;text-align:center;top:976px;font-size:13px;line-height:13px;color:#b8b8b8;font-weight:normal;white-space:nowrap;">1 MHz</div>
<div style="position:absolute;left:459.20000000000005px;width:400px;text-align:center;top:976px;font-size:13px;line-height:13px;color:#b8b8b8;font-weight:normal;white-space:nowrap;">10 MHz</div>
<div style="position:absolute;left:601.9px;width:400px;text-align:center;top:976px;font-size:13px;line-height:13px;color:#b8b8b8;font-weight:normal;white-space:nowrap;">100 MHz</div>
<div style="position:absolute;left:3px;top:577px;width:179px;height:60px;background:rgba(60,60,60,0.84);border-radius:5px;"></div><div style="position:absolute;left:7px;top:582px;font-size:22px;line-height:26px;color:#e8e8e8;white-space:nowrap;">X: 1 kHz</div><div style="position:absolute;left:7px;top:608px;font-size:22px;line-height:26px;color:#e8e8e8;white-space:nowrap;">Y: -2.002 dBm</div>
<div style="position:absolute;left:236px;top:577px;width:479px;height:62px;background:rgba(60,60,60,0.84);border-radius:5px;"></div><div style="position:absolute;left:239px;top:582px;font-size:22px;line-height:26px;color:#e8e8e8;white-space:nowrap;">ΔX: 261.675 MHz</div><div style="position:absolute;left:239px;top:608px;font-size:22px;line-height:26px;color:#e8e8e8;white-space:nowrap;">ΔY: 96.314 dBm</div>
<div style="position:absolute;left:449px;top:582px;font-size:22px;line-height:22px;color:#e8e8e8;font-weight:normal;white-space:nowrap;line-height:26px;">1/ΔX: 3.82 ns</div>
<div style="position:absolute;left:426px;top:608px;font-size:22px;line-height:22px;color:#e8e8e8;font-weight:normal;white-space:nowrap;line-height:26px;">ΔY/ΔX: 368.07 ndBm/Hz</div>
<div style="position:absolute;left:693px;top:644px;width:180px;height:59px;background:rgba(60,60,60,0.84);border-radius:5px;"></div><div style="position:absolute;left:697px;top:648px;font-size:22px;line-height:26px;color:#e8e8e8;white-space:nowrap;">X: 261.676 MHz</div><div style="position:absolute;left:697px;top:674px;font-size:22px;line-height:26px;color:#e8e8e8;white-space:nowrap;">Y: -98.315 dBm</div>
<svg style="left:879px;top:514px" width="870" height="476" viewBox="879 514 870 476"><line x1="879.5" y1="543" x2="879.5" y2="765" stroke="#b4b4b4" stroke-width="1" stroke-dasharray="1 3.5"/><line x1="966.5" y1="543" x2="966.5" y2="765" stroke="#b4b4b4" stroke-width="1" stroke-dasharray="1 3.5"/><line x1="1053.5" y1="543" x2="1053.5" y2="765" stroke="#b4b4b4" stroke-width="1" stroke-dasharray="1 3.5"/><line x1="1140.5" y1="543" x2="1140.5" y2="765" stroke="#b4b4b4" stroke-width="1" stroke-dasharray="1 3.5"/><line x1="1227.5" y1="543" x2="1227.5" y2="765" stroke="#b4b4b4" stroke-width="1" stroke-dasharray="1 3.5"/><line x1="1314.5" y1="543" x2="1314.5" y2="765" stroke="#b4b4b4" stroke-width="1" stroke-dasharray="1 3.5"/><line x1="1401.5" y1="543" x2="1401.5" y2="765" stroke="#b4b4b4" stroke-width="1" stroke-dasharray="1 3.5"/><line x1="1488.5" y1="543" x2="1488.5" y2="765" stroke="#b4b4b4" stroke-width="1" stroke-dasharray="1 3.5"/><line x1="1575.5" y1="543" x2="1575.5" y2="765" stroke="#b4b4b4" stroke-width="1" stroke-dasharray="1 3.5"/><line x1="1662.5" y1="543" x2="1662.5" y2="765" stroke="#b4b4b4" stroke-width="1" stroke-dasharray="1 3.5"/><line x1="879.5" y1="543.5" x2="1749" y2="543.5" stroke="#b4b4b4" stroke-width="1" stroke-dasharray="1 16.4"/><line x1="879.5" y1="556.4" x2="1749" y2="556.4" stroke="#b4b4b4" stroke-width="1" stroke-dasharray="1 16.4"/><line x1="879.5" y1="578.9499999999999" x2="1749" y2="578.9499999999999" stroke="#b4b4b4" stroke-width="1" stroke-dasharray="1 16.4"/><line x1="879.5" y1="601.5" x2="1749" y2="601.5" stroke="#b4b4b4" stroke-width="1" stroke-dasharray="1 16.4"/><line x1="879.5" y1="624.05" x2="1749" y2="624.05" stroke="#b4b4b4" stroke-width="1" stroke-dasharray="1 16.4"/><line x1="879.5" y1="646.6" x2="1749" y2="646.6" stroke="#b4b4b4" stroke-width="1" stroke-dasharray="1 16.4"/><line x1="879.5" y1="669.15" x2="1749" y2="669.15" stroke="#b4b4b4" stroke-width="1" stroke-dasharray="1 16.4"/><line x1="879.5" y1="691.7" x2="1749" y2="691.7" stroke="#b4b4b4" stroke-width="1" stroke-dasharray="1 16.4"/><line x1="879.5" y1="714.25" x2="1749" y2="714.25" stroke="#b4b4b4" stroke-width="1" stroke-dasharray="1 16.4"/><line x1="879.5" y1="736.8" x2="1749" y2="736.8" stroke="#b4b4b4" stroke-width="1" stroke-dasharray="1 16.4"/><line x1="879.5" y1="759.35" x2="1749" y2="759.35" stroke="#b4b4b4" stroke-width="1" stroke-dasharray="1 16.4"/><rect x="879" y="765" width="870" height="2" fill="#8c8c8c"/><line x1="879.5" y1="770" x2="879.5" y2="990" stroke="#b4b4b4" stroke-width="1" stroke-dasharray="1 3.5"/><line x1="966.5" y1="770" x2="966.5" y2="990" stroke="#b4b4b4" stroke-width="1" stroke-dasharray="1 3.5"/><line x1="1053.5" y1="770" x2="1053.5" y2="990" stroke="#b4b4b4" stroke-width="1" stroke-dasharray="1 3.5"/><line x1="1140.5" y1="770" x2="1140.5" y2="990" stroke="#b4b4b4" stroke-width="1" stroke-dasharray="1 3.5"/><line x1="1227.5" y1="770" x2="1227.5" y2="990" stroke="#b4b4b4" stroke-width="1" stroke-dasharray="1 3.5"/><line x1="1314.5" y1="770" x2="1314.5" y2="990" stroke="#b4b4b4" stroke-width="1" stroke-dasharray="1 3.5"/><line x1="1401.5" y1="770" x2="1401.5" y2="990" stroke="#b4b4b4" stroke-width="1" stroke-dasharray="1 3.5"/><line x1="1488.5" y1="770" x2="1488.5" y2="990" stroke="#b4b4b4" stroke-width="1" stroke-dasharray="1 3.5"/><line x1="1575.5" y1="770" x2="1575.5" y2="990" stroke="#b4b4b4" stroke-width="1" stroke-dasharray="1 3.5"/><line x1="1662.5" y1="770" x2="1662.5" y2="990" stroke="#b4b4b4" stroke-width="1" stroke-dasharray="1 3.5"/><line x1="879.5" y1="788.0" x2="1749" y2="788.0" stroke="#b4b4b4" stroke-width="1" stroke-dasharray="1 16.4"/><line x1="879.5" y1="810.5" x2="1749" y2="810.5" stroke="#b4b4b4" stroke-width="1" stroke-dasharray="1 16.4"/><line x1="879.5" y1="833.0" x2="1749" y2="833.0" stroke="#b4b4b4" stroke-width="1" stroke-dasharray="1 16.4"/><line x1="879.5" y1="855.5" x2="1749" y2="855.5" stroke="#b4b4b4" stroke-width="1" stroke-dasharray="1 16.4"/><line x1="879.5" y1="878.0" x2="1749" y2="878.0" stroke="#b4b4b4" stroke-width="1" stroke-dasharray="1 16.4"/><line x1="879.5" y1="900.5" x2="1749" y2="900.5" stroke="#b4b4b4" stroke-width="1" stroke-dasharray="1 16.4"/><line x1="879.5" y1="923.0" x2="1749" y2="923.0" stroke="#b4b4b4" stroke-width="1" stroke-dasharray="1 16.4"/><line x1="879.5" y1="945.5" x2="1749" y2="945.5" stroke="#b4b4b4" stroke-width="1" stroke-dasharray="1 16.4"/><line x1="879.5" y1="968.0" x2="1749" y2="968.0" stroke="#b4b4b4" stroke-width="1" stroke-dasharray="1 16.4"/><rect x="1120.5" y="745.5" width="387" height="18" fill="#2f2c0a" stroke="#e6dc22" stroke-width="1"/><rect x="1120.5" y="971.5" width="387" height="17.5" fill="#0a2428" stroke="#22c4d2" stroke-width="1"/><line x1="917" y1="877.5" x2="1700" y2="877.5" stroke="#b0b0b0" stroke-width="1" stroke-dasharray="6 4"/><line x1="1314.5" y1="578" x2="1314.5" y2="971" stroke="#d8d8d8" stroke-width="1" stroke-dasharray="8 4"/><path d="M879.5 610 L890 583 L905 716.1 L907.9 683.3 L912.4 675.8 L920.4 647.5 L925.5 640 L930.6 617.7 L935.1 613.2 L940.9 593.7 L946.4 584 L961.5 717 L964.4 684.2 L968.9 676.7 L976.8 648.4 L981.9 640.8 L987.1 618.5 L991.5 614 L997.3 594.6 L1002.8 584.8 L1017.9 716.7 L1020.9 684 L1025.4 676.4 L1033.4 648.2 L1038.6 640.7 L1043.8 618.4 L1048.2 613.9 L1054.1 594.5 L1059.7 584.7 L1075 713.1 L1078 680.8 L1082.5 673.4 L1090.5 645.5 L1095.7 638.1 L1100.9 616.1 L1105.4 611.7 L1111.3 592.5 L1116.9 582.9 L1131.9 717.7 L1135 684.5 L1139.8 676.8 L1148.2 648.1 L1153.6 640.5 L1159.1 617.8 L1163.8 613.2 L1170 593.5 L1175.8 583.6 L1190.3 717.5 L1193.2 683.8 L1197.6 676 L1205.4 646.9 L1210.4 639.1 L1215.4 616.1 L1219.8 611.5 L1225.5 591.5 L1230.9 581.5 L1245.9 715.3 L1248.8 682.3 L1253.2 674.7 L1261 646.1 L1266 638.5 L1271 616 L1275.4 611.5 L1281.1 591.9 L1286.5 582 L1301 715.7 L1303.9 682.9 L1308.4 675.3 L1316.4 647 L1321.5 639.4 L1326.7 617.1 L1331.1 612.6 L1337 593.1 L1342.5 583.3 L1357 713.1 L1360 680.5 L1364.6 673 L1372.8 645 L1378 637.5 L1383.3 615.3 L1387.9 610.9 L1393.8 591.6 L1399.5 581.9 L1414.5 714.4 L1417.4 682.2 L1421.8 674.8 L1429.7 647.1 L1434.7 639.7 L1439.8 617.7 L1444.2 613.3 L1450 594.3 L1455.4 584.7 L1470.4 716.8 L1473.3 683.3 L1477.7 675.6 L1485.6 646.7 L1490.6 639 L1495.7 616.1 L1500.1 611.5 L1505.9 591.6 L1511.3 581.6 L1526.3 717 L1529.3 683.4 L1533.8 675.7 L1541.8 646.7 L1547 639 L1552.2 616.1 L1556.7 611.5 L1562.6 591.6 L1568.2 581.6 L1583.2 716.1 L1586 682.7 L1590.1 675 L1597.6 646.2 L1602.4 638.6 L1607.2 615.8 L1611.4 611.2 L1616.8 591.5 L1622 581.5 L1636.6 713 L1639.4 681.1 L1643.8 673.8 L1651.5 646.3 L1656.4 639 L1661.4 617.3 L1665.7 612.9 L1671.4 594 L1676.7 584.5 L1692.2 714 L1695.1 681.3 L1699.6 673.7 L1707.6 645.4 L1712.7 637.9 L1717.8 615.6 L1722.3 611.1 L1728.1 591.6 L1733.6 581.9 L1749 705" fill="none" stroke="#f6f000" stroke-width="1.5" stroke-linejoin="round" /><path d="M879.5 610 L890 583" fill="none" stroke="#f6f000" stroke-width="2.2" stroke-linejoin="round" /><path d="M905 716.1 L907.9 683.3 L912.4 675.8 L920.4 647.5 L925.5 640 L930.6 617.7 L935.1 613.2 L940.9 593.7 L946.4 584" fill="none" stroke="#f6f000" stroke-width="2.2" stroke-linejoin="round" /><path d="M961.5 717 L964.4 684.2 L968.9 676.7 L976.8 648.4 L981.9 640.8 L987.1 618.5 L991.5 614 L997.3 594.6 L1002.8 584.8" fill="none" stroke="#f6f000" stroke-width="2.2" stroke-linejoin="round" /><path d="M1017.9 716.7 L1020.9 684 L1025.4 676.4 L1033.4 648.2 L1038.6 640.7 L1043.8 618.4 L1048.2 613.9 L1054.1 594.5 L1059.7 584.7" fill="none" stroke="#f6f000" stroke-width="2.2" stroke-linejoin="round" /><path d="M1075 713.1 L1078 680.8 L1082.5 673.4 L1090.5 645.5 L1095.7 638.1 L1100.9 616.1 L1105.4 611.7 L1111.3 592.5 L1116.9 582.9" fill="none" stroke="#f6f000" stroke-width="2.2" stroke-linejoin="round" /><path d="M1131.9 717.7 L1135 684.5 L1139.8 676.8 L1148.2 648.1 L1153.6 640.5 L1159.1 617.8 L1163.8 613.2 L1170 593.5 L1175.8 583.6" fill="none" stroke="#f6f000" stroke-width="2.2" stroke-linejoin="round" /><path d="M1190.3 717.5 L1193.2 683.8 L1197.6 676 L1205.4 646.9 L1210.4 639.1 L1215.4 616.1 L1219.8 611.5 L1225.5 591.5 L1230.9 581.5" fill="none" stroke="#f6f000" stroke-width="2.2" stroke-linejoin="round" /><path d="M1245.9 715.3 L1248.8 682.3 L1253.2 674.7 L1261 646.1 L1266 638.5 L1271 616 L1275.4 611.5 L1281.1 591.9 L1286.5 582" fill="none" stroke="#f6f000" stroke-width="2.2" stroke-linejoin="round" /><path d="M1301 715.7 L1303.9 682.9 L1308.4 675.3 L1316.4 647 L1321.5 639.4 L1326.7 617.1 L1331.1 612.6 L1337 593.1 L1342.5 583.3" fill="none" stroke="#f6f000" stroke-width="2.2" stroke-linejoin="round" /><path d="M1357 713.1 L1360 680.5 L1364.6 673 L1372.8 645 L1378 637.5 L1383.3 615.3 L1387.9 610.9 L1393.8 591.6 L1399.5 581.9" fill="none" stroke="#f6f000" stroke-width="2.2" stroke-linejoin="round" /><path d="M1414.5 714.4 L1417.4 682.2 L1421.8 674.8 L1429.7 647.1 L1434.7 639.7 L1439.8 617.7 L1444.2 613.3 L1450 594.3 L1455.4 584.7" fill="none" stroke="#f6f000" stroke-width="2.2" stroke-linejoin="round" /><path d="M1470.4 716.8 L1473.3 683.3 L1477.7 675.6 L1485.6 646.7 L1490.6 639 L1495.7 616.1 L1500.1 611.5 L1505.9 591.6 L1511.3 581.6" fill="none" stroke="#f6f000" stroke-width="2.2" stroke-linejoin="round" /><path d="M1526.3 717 L1529.3 683.4 L1533.8 675.7 L1541.8 646.7 L1547 639 L1552.2 616.1 L1556.7 611.5 L1562.6 591.6 L1568.2 581.6" fill="none" stroke="#f6f000" stroke-width="2.2" stroke-linejoin="round" /><path d="M1583.2 716.1 L1586 682.7 L1590.1 675 L1597.6 646.2 L1602.4 638.6 L1607.2 615.8 L1611.4 611.2 L1616.8 591.5 L1622 581.5" fill="none" stroke="#f6f000" stroke-width="2.2" stroke-linejoin="round" /><path d="M1636.6 713 L1639.4 681.1 L1643.8 673.8 L1651.5 646.3 L1656.4 639 L1661.4 617.3 L1665.7 612.9 L1671.4 594 L1676.7 584.5" fill="none" stroke="#f6f000" stroke-width="2.2" stroke-linejoin="round" /><path d="M1692.2 714 L1695.1 681.3 L1699.6 673.7 L1707.6 645.4 L1712.7 637.9 L1717.8 615.6 L1722.3 611.1 L1728.1 591.6 L1733.6 581.9" fill="none" stroke="#f6f000" stroke-width="2.2" stroke-linejoin="round" /><path d="M879 849.4 L881 852.3 L883 855.2 L885 858.2 L887 861.3 L889 864.4 L891 867.6 L893 870.8 L895 874 L897 877.2 L899 880.5 L901 883.7 L903 886.9 L905 890.1 L907 893.2 L909 896.3 L911 899.3 L913 902.2 L915 905.1 L917 907.8 L919 910.5 L921 913 L923 915.5 L925 917.8 L927 919.9 L929 921.9 L931 923.8 L933 925.5 L935 927.1 L937 928.5 L939 929.7 L941 930.7 L943 931.6 L945 932.3 L947 932.8 L949 933.1 L951 933.2 L953 933.2 L955 932.9 L957 932.5 L959 931.9 L961 931.1 L963 930.1 L965 929 L967 927.7 L969 926.2 L971 924.5 L973 922.7 L975 920.7 L977 918.6 L979 916.4 L981 914 L983 911.5 L985 908.9 L987 906.2 L989 903.4 L991 900.5 L993 897.5 L995 894.4 L997 891.3 L999 888.2 L1001 885 L1003 881.8 L1005 878.5 L1007 875.3 L1009 872.1 L1011 868.9 L1013 865.7 L1015 862.5 L1017 859.5 L1019 856.4 L1021 853.5 L1023 850.6 L1025 847.8 L1027 845.1 L1029 842.5 L1031 840 L1033 837.7 L1035 835.4 L1037 833.4 L1039 831.4 L1041 829.6 L1043 828 L1045 826.6 L1047 825.3 L1049 824.2 L1051 823.2 L1053 822.5 L1055 821.9 L1057 821.5 L1059 821.3 L1061 821.3 L1063 821.4 L1065 821.8 L1067 822.3 L1069 823 L1071 824 L1073 825 L1075 826.3 L1077 827.7 L1079 829.3 L1081 831.1 L1083 833 L1085 835 L1087 837.2 L1089 839.5 L1091 842 L1093 844.5 L1095 847.2 L1097 850 L1099 852.9 L1101 855.8 L1103 858.8 L1105 861.9 L1107 865.1 L1109 868.2 L1111 871.4 L1113 874.7 L1115 877.9 L1117 881.1 L1119 884.3 L1121 887.5 L1123 890.7 L1125 893.8 L1127 896.9 L1129 899.9 L1131 902.8 L1133 905.6 L1135 908.4 L1137 911 L1139 913.5 L1141 915.9 L1143 918.2 L1145 920.3 L1147 922.3 L1149 924.2 L1151 925.9 L1153 927.4 L1155 928.7 L1157 929.9 L1159 930.9 L1161 931.8 L1163 932.4 L1165 932.9 L1167 933.2 L1169 933.2 L1171 933.2 L1173 932.9 L1175 932.4 L1177 931.8 L1179 930.9 L1181 929.9 L1183 928.7 L1185 927.4 L1187 925.9 L1189 924.2 L1191 922.3 L1193 920.3 L1195 918.2 L1197 915.9 L1199 913.5 L1201 911 L1203 908.4 L1205 905.6 L1207 902.8 L1209 899.9 L1211 896.9 L1213 893.8 L1215 890.7 L1217 887.5 L1219 884.3 L1221 881.1 L1223 877.9 L1225 874.7 L1227 871.4 L1229 868.2 L1231 865.1 L1233 861.9 L1235 858.8 L1237 855.8 L1239 852.9 L1241 850 L1243 847.2 L1245 844.5 L1247 842 L1249 839.5 L1251 837.2 L1253 835 L1255 833 L1257 831.1 L1259 829.3 L1261 827.7 L1263 826.3 L1265 825 L1267 824 L1269 823 L1271 822.3 L1273 821.8 L1275 821.4 L1277 821.3 L1279 821.3 L1281 821.5 L1283 821.9 L1285 822.5 L1287 823.2 L1289 824.2 L1291 825.3 L1293 826.6 L1295 828 L1297 829.6 L1299 831.4 L1301 833.4 L1303 835.4 L1305 837.7 L1307 840 L1309 842.5 L1311 845.1 L1313 847.8 L1315 850.6 L1317 853.5 L1319 856.4 L1321 859.5 L1323 862.5 L1325 865.7 L1327 868.9 L1329 872.1 L1331 875.3 L1333 878.5 L1335 881.8 L1337 885 L1339 888.2 L1341 891.3 L1343 894.4 L1345 897.5 L1347 900.5 L1349 903.4 L1351 906.2 L1353 908.9 L1355 911.5 L1357 914 L1359 916.4 L1361 918.6 L1363 920.7 L1365 922.7 L1367 924.5 L1369 926.2 L1371 927.7 L1373 929 L1375 930.1 L1377 931.1 L1379 931.9 L1381 932.5 L1383 932.9 L1385 933.2 L1387 933.2 L1389 933.1 L1391 932.8 L1393 932.3 L1395 931.6 L1397 930.7 L1399 929.7 L1401 928.5 L1403 927.1 L1405 925.5 L1407 923.8 L1409 921.9 L1411 919.9 L1413 917.8 L1415 915.5 L1417 913 L1419 910.5 L1421 907.8 L1423 905.1 L1425 902.2 L1427 899.3 L1429 896.3 L1431 893.2 L1433 890.1 L1435 886.9 L1437 883.7 L1439 880.5 L1441 877.2 L1443 874 L1445 870.8 L1447 867.6 L1449 864.4 L1451 861.3 L1453 858.2 L1455 855.2 L1457 852.3 L1459 849.4 L1461 846.7 L1463 844 L1465 841.5 L1467 839 L1469 836.7 L1471 834.6 L1473 832.6 L1475 830.7 L1477 829 L1479 827.4 L1481 826 L1483 824.8 L1485 823.8 L1487 822.9 L1489 822.2 L1491 821.7 L1493 821.4 L1495 821.3 L1497 821.3 L1499 821.6 L1501 822 L1503 822.6 L1505 823.4 L1507 824.4 L1509 825.5 L1511 826.8 L1513 828.3 L1515 830 L1517 831.8 L1519 833.8 L1521 835.9 L1523 838.1 L1525 840.5 L1527 843 L1529 845.6 L1531 848.3 L1533 851.1 L1535 854 L1537 857 L1539 860.1 L1541 863.2 L1543 866.3 L1545 869.5 L1547 872.7 L1549 876 L1551 879.2 L1553 882.4 L1555 885.6 L1557 888.8 L1559 892 L1561 895 L1563 898.1 L1565 901 L1567 903.9 L1569 906.7 L1571 909.4 L1573 912 L1575 914.5 L1577 916.8 L1579 919.1 L1581 921.1 L1583 923.1 L1585 924.9 L1587 926.5 L1589 927.9 L1591 929.2 L1593 930.3 L1595 931.3 L1597 932 L1599 932.6 L1601 933 L1603 933.2 L1605 933.2 L1607 933.1 L1609 932.7 L1611 932.2 L1613 931.5 L1615 930.5 L1617 929.5 L1619 928.2 L1621 926.8 L1623 925.2 L1625 923.4 L1627 921.5 L1629 919.5 L1631 917.3 L1633 915 L1635 912.5 L1637 910 L1639 907.3 L1641 904.5 L1643 901.6 L1645 898.7 L1647 895.7 L1649 892.6 L1651 889.4 L1653 886.3 L1655 883.1 L1657 879.8 L1659 876.6 L1661 873.4 L1663 870.2 L1665 867 L1667 863.8 L1669 860.7 L1671 857.6 L1673 854.6 L1675 851.7 L1677 848.9 L1679 846.1 L1681 843.5 L1683 841 L1685 838.6 L1687 836.3 L1689 834.2 L1691 832.2 L1693 830.3 L1695 828.6 L1697 827.1 L1699 825.8 L1701 824.6 L1703 823.6 L1705 822.7 L1707 822.1 L1709 821.6 L1711 821.3 L1713 821.2 L1715 821.3 L1717 821.6 L1719 822.1 L1721 822.7 L1723 823.6 L1725 824.6 L1727 825.8 L1729 827.1 L1731 828.6 L1733 830.3 L1735 832.2 L1737 834.2 L1739 836.3 L1741 838.6 L1743 841 L1745 843.5 L1747 846.1 L1749 848.9" fill="none" stroke="#1fc3cf" stroke-width="3" stroke-linejoin="round" /><path d="M884 638.5 H907 L917.5 651 L907 663.5 H884 Q881.5 663.5 881.5 661 V641 Q881.5 638.5 884 638.5 Z" fill="#24220a" stroke="#e8e030" stroke-width="1"/><path d="M884 864.5 H907 L917.5 877 L907 889.5 H884 Q881.5 889.5 881.5 887 V867 Q881.5 864.5 884 864.5 Z" fill="#08201f" stroke="#22c4d2" stroke-width="1"/><path d="M1727 651.5 L1738 643 V649.5 H1749 V653.5 H1738 V660 Z" fill="#f4ec2a"/><path d="M1304 539 H1324 L1314 548.5 Z" fill="#f39020"/><path d="M1305 550 H1323 V569 H1318 L1314 576 L1310 569 H1305 Z" fill="#000" stroke="#f39020" stroke-width="2"/><path d="M1309.5 555 H1318.5 M1314 555 V565" stroke="#f39020" stroke-width="1.8"/><path d="M1175 518 H1170.5 V536 H1175 M1453 518 H1457.5 V536 H1453" fill="none" stroke="#c8c8c8" stroke-width="1.5"/><rect x="1171" y="526" width="286" height="2" fill="#c0c0c0"/><path d="M1306 515 H1321.5 L1314 520.5 Z" fill="#f39020"/><path d="M1307.5 522 H1320.5 V534 H1317 L1314 538 L1311 534 H1307.5 Z" fill="#000" stroke="#f39020" stroke-width="1.4"/><path d="M1310.5 525 H1317.5 M1314 525 V532" stroke="#f39020" stroke-width="1.5"/></svg>
<div style="position:absolute;left:887px;top:644px;font-size:15px;line-height:15px;color:#e8e030;font-weight:normal;white-space:nowrap;">C 1</div>
<div style="position:absolute;left:887px;top:870px;font-size:15px;line-height:15px;color:#22c4d2;font-weight:normal;white-space:nowrap;">C 2</div>
<div style="position:absolute;right:173px;top:550.4px;font-size:13px;line-height:13px;color:#e6de2a;font-weight:normal;white-space:nowrap;">3.395925 V</div>
<div style="position:absolute;right:173px;top:572.9499999999999px;font-size:13px;line-height:13px;color:#e6de2a;font-weight:normal;white-space:nowrap;">3.387150 V</div>
<div style="position:absolute;right:173px;top:595.5px;font-size:13px;line-height:13px;color:#e6de2a;font-weight:normal;white-space:nowrap;">3.378375 V</div>
<div style="position:absolute;right:173px;top:618.05px;font-size:13px;line-height:13px;color:#e6de2a;font-weight:normal;white-space:nowrap;">3.369600 V</div>
<div style="position:absolute;right:173px;top:640.6px;font-size:13px;line-height:13px;color:#e6de2a;font-weight:normal;white-space:nowrap;">3.360825 V</div>
<div style="position:absolute;right:173px;top:663.15px;font-size:13px;line-height:13px;color:#e6de2a;font-weight:normal;white-space:nowrap;">3.352050 V</div>
<div style="position:absolute;right:173px;top:685.7px;font-size:13px;line-height:13px;color:#e6de2a;font-weight:normal;white-space:nowrap;">3.343275 V</div>
<div style="position:absolute;right:173px;top:708.25px;font-size:13px;line-height:13px;color:#e6de2a;font-weight:normal;white-space:nowrap;">3.334500 V</div>
<div style="position:absolute;right:173px;top:730.8px;font-size:13px;line-height:13px;color:#e6de2a;font-weight:normal;white-space:nowrap;">3.325725 V</div>
<div style="position:absolute;right:173px;top:782.0px;font-size:13px;line-height:13px;color:#22c4d2;font-weight:normal;white-space:nowrap;">400 mV</div>
<div style="position:absolute;right:173px;top:804.5px;font-size:13px;line-height:13px;color:#22c4d2;font-weight:normal;white-space:nowrap;">300 mV</div>
<div style="position:absolute;right:173px;top:827.0px;font-size:13px;line-height:13px;color:#22c4d2;font-weight:normal;white-space:nowrap;">200 mV</div>
<div style="position:absolute;right:173px;top:849.5px;font-size:13px;line-height:13px;color:#22c4d2;font-weight:normal;white-space:nowrap;">100 mV</div>
<div style="position:absolute;right:173px;top:872.0px;font-size:13px;line-height:13px;color:#22c4d2;font-weight:normal;white-space:nowrap;">0 V</div>
<div style="position:absolute;right:173px;top:894.5px;font-size:13px;line-height:13px;color:#22c4d2;font-weight:normal;white-space:nowrap;">-100 mV</div>
<div style="position:absolute;right:173px;top:917.0px;font-size:13px;line-height:13px;color:#22c4d2;font-weight:normal;white-space:nowrap;">-200 mV</div>
<div style="position:absolute;right:173px;top:939.5px;font-size:13px;line-height:13px;color:#22c4d2;font-weight:normal;white-space:nowrap;">-300 mV</div>
<div style="position:absolute;right:173px;top:962.0px;font-size:13px;line-height:13px;color:#22c4d2;font-weight:normal;white-space:nowrap;">-400 mV</div>
<div style="position:absolute;left:766.5px;width:400px;text-align:center;top:974px;font-size:13px;line-height:13px;color:#c8c8c8;font-weight:normal;white-space:nowrap;">-1.6 ms</div>
<div style="position:absolute;left:853.5px;width:400px;text-align:center;top:974px;font-size:13px;line-height:13px;color:#c8c8c8;font-weight:normal;white-space:nowrap;">-1.2 ms</div>
<div style="position:absolute;left:940.5px;width:400px;text-align:center;top:974px;font-size:13px;line-height:13px;color:#c8c8c8;font-weight:normal;white-space:nowrap;">-800 μs</div>
<div style="position:absolute;left:1027.5px;width:400px;text-align:center;top:974px;font-size:13px;line-height:13px;color:#c8c8c8;font-weight:normal;white-space:nowrap;">-400 μs</div>
<div style="position:absolute;left:1114.5px;width:400px;text-align:center;top:974px;font-size:13px;line-height:13px;color:#c8c8c8;font-weight:normal;white-space:nowrap;">0 s</div>
<div style="position:absolute;left:1201.5px;width:400px;text-align:center;top:974px;font-size:13px;line-height:13px;color:#c8c8c8;font-weight:normal;white-space:nowrap;">400 μs</div>
<div style="position:absolute;left:1288.5px;width:400px;text-align:center;top:974px;font-size:13px;line-height:13px;color:#c8c8c8;font-weight:normal;white-space:nowrap;">800 μs</div>
<div style="position:absolute;left:1375.5px;width:400px;text-align:center;top:974px;font-size:13px;line-height:13px;color:#c8c8c8;font-weight:normal;white-space:nowrap;">1.2 ms</div>
<div style="position:absolute;left:1462.5px;width:400px;text-align:center;top:974px;font-size:13px;line-height:13px;color:#c8c8c8;font-weight:normal;white-space:nowrap;">1.6 ms</div>
<svg style="left:1700px;top:540px" width="49" height="45" viewBox="1700 540 49 45"><path d="M1708 546 H1740 Q1742 546 1742 548 V580 Z" fill="#4c4c4c" stroke="#000" stroke-width="1"/><circle cx="1735.5" cy="552.5" r="4.3" fill="none" stroke="#b8b8b8" stroke-width="1.8"/><path d="M1732.3 555.7 L1726.5 561.5" stroke="#b8b8b8" stroke-width="2.6" stroke-linecap="round"/></svg>
<div style="position:absolute;left:1771px;top:206px;width:144px;height:119px;border-radius:5px;overflow:hidden;background:#cacaca;"><div style="position:absolute;left:0;top:0;width:144px;height:20px;background:#050505;"></div><div style="position:absolute;left:4px;top:2px;font-size:14.5px;line-height:17px;color:#f0ea20;">DPM Meas 1</div><div style="position:absolute;left:116px;top:5px;width:21px;height:10px;background:#f2ec28;border-radius:1px;font-size:9px;line-height:10px;text-align:center;color:#000;">1</div><div style="position:absolute;left:6px;top:23px;font-size:14px;line-height:19px;color:#161616;white-space:nowrap;">Ripple'<br>Rail<br>1 RMS:<br>&nbsp;&nbsp;@Freq:<br>&nbsp;&nbsp;Pk-Pk:</div><div style="position:absolute;left:70px;top:61px;font-size:14px;line-height:19px;color:#161616;white-space:nowrap;">14.55 mV<br>3.816 kHz<br>53.23 mV</div></div>
<div style="position:absolute;left:1771px;top:330px;width:144px;height:62px;border-radius:5px;overflow:hidden;background:#cacaca;"><div style="position:absolute;left:0;top:0;width:144px;height:20px;background:#585858;"></div><div style="position:absolute;left:4px;top:2px;font-size:14.5px;line-height:17px;color:#f0f0f0;">Meas 2</div><div style="position:absolute;left:116px;top:5px;width:21px;height:10px;background:#f2ec28;border-radius:1px;font-size:9px;line-height:10px;text-align:center;color:#000;">1</div><div style="position:absolute;left:6px;top:23px;font-size:14px;line-height:19px;color:#161616;white-space:nowrap;">Frequency<br>μ': 3.871 kHz</div></div>
<div style="position:absolute;left:1771px;top:941px;width:144px;height:1px;background:#5e5853;"></div>
<div style="position:absolute;left:1775px;top:950px;width:62px;height:38px;border:1px solid #6d645c;border-radius:5px;background:linear-gradient(#3c3c3c,#2a2a2a 80%,#202020);"></div>
<svg style="left:1790px;top:955px" width="30" height="30"><path d="M3 3h12v11M3 3v11h9" fill="none" stroke="#c8c8c8" stroke-width="1.2" stroke-dasharray="2 2"/><circle cx="16" cy="16" r="5" fill="none" stroke="#d8d8d8" stroke-width="2"/><path d="M19.5 19.5L25 25" stroke="#d8d8d8" stroke-width="3" stroke-linecap="round"/></svg>
<svg style="left:1864px;top:952px" width="32" height="34"><path d="M3 6h26" stroke="#cfcfcf" stroke-width="2.4"/><path d="M11 6V3h10v3" fill="none" stroke="#cfcfcf" stroke-width="1.8"/><path d="M6 9l2 23h16l2-23" fill="none" stroke="#cfcfcf" stroke-width="2.2"/><path d="M11.5 11l1 18M16 11v18M20.5 11l-1 18" stroke="#cfcfcf" stroke-width="1.4"/></svg>
<svg style="left:1755px;top:497px" width="10" height="26"><circle cx="4.3" cy="4.7" r="2" fill="#c8c8c8"/><circle cx="4.3" cy="13" r="2" fill="#c8c8c8"/><circle cx="4.3" cy="21.6" r="2" fill="#c8c8c8"/></svg>

<div style="position:absolute;left:3px;top:997px;width:90px;height:79px;border-radius:5px;overflow:hidden;background:#cbcbcb;"><div style="position:absolute;left:0;top:0;width:90px;height:19px;background:#4b4823;"></div><div style="position:absolute;left:0;top:19px;width:90px;height:2px;background:#a9a9a9;"></div><div style="position:absolute;left:8px;top:1px;font-size:16px;line-height:17px;color:#e8e82c;">Ch 1</div><div style="position:absolute;left:8px;top:24px;font-size:14px;line-height:16px;color:#141414;white-space:nowrap;">8.775 mV...</div><div style="position:absolute;left:8px;top:43px;font-size:14px;line-height:16px;color:#141414;white-space:nowrap;">10 dBm/div</div><div style="position:absolute;left:8px;top:62px;font-size:14px;line-height:16px;color:#141414;white-space:nowrap;">20 MHz</div><div style="position:absolute;left:77px;top:59px;font-size:10px;line-height:10px;color:#000;font-weight:bold;">B<span style="font-size:8px;position:relative;top:3px">w</span></div></div>
<div style="position:absolute;left:98px;top:997px;width:90px;height:79px;border-radius:5px;overflow:hidden;background:#cbcbcb;"><div style="position:absolute;left:0;top:0;width:90px;height:19px;background:#1d3f41;"></div><div style="position:absolute;left:0;top:19px;width:90px;height:2px;background:#a9a9a9;"></div><div style="position:absolute;left:8px;top:1px;font-size:16px;line-height:17px;color:#2cc8d4;">Ch 2</div><div style="position:absolute;left:8px;top:24px;font-size:14px;line-height:16px;color:#141414;white-space:nowrap;">100 mV/div</div><div style="position:absolute;left:8px;top:43px;font-size:14px;line-height:16px;color:#141414;white-space:nowrap;">10 dBm/div</div><div style="position:absolute;left:8px;top:62px;font-size:14px;line-height:16px;color:#141414;white-space:nowrap;">200 MHz</div><div style="position:absolute;left:77px;top:59px;font-size:10px;line-height:10px;color:#000;font-weight:bold;">B<span style="font-size:8px;position:relative;top:3px">w</span></div></div>
<div style="position:absolute;left:193px;top:997px;width:90px;height:79px;border-radius:5px;overflow:hidden;background:#cbcbcb;"><div style="position:absolute;left:0;top:0;width:90px;height:19px;background:#ec912b;"></div><div style="position:absolute;left:0;top:19px;width:90px;height:2px;background:#a9a9a9;"></div><div style="position:absolute;left:8px;top:1px;font-size:16px;line-height:17px;color:#111;">Math 1</div><div style="position:absolute;left:8px;top:24px;font-size:14px;line-height:16px;color:#141414;white-space:nowrap;">20 dBm/div</div><div style="position:absolute;left:8px;top:43px;font-size:14px;line-height:16px;color:#141414;white-space:nowrap;"></div><div style="position:absolute;left:8px;top:62px;font-size:14px;line-height:16px;color:#141414;white-space:nowrap;">FFTMag(C...</div></div>
<div style="position:absolute;left:288px;top:997px;width:90px;height:79px;border-radius:5px;overflow:hidden;background:#cbcbcb;"><div style="position:absolute;left:0;top:0;width:90px;height:19px;background:#2d2034;"></div><div style="position:absolute;left:0;top:19px;width:90px;height:2px;background:#a9a9a9;"></div><div style="position:absolute;left:8px;top:1px;font-size:16px;line-height:17px;color:#8a40b0;">Math 2</div><div style="position:absolute;left:8px;top:24px;font-size:14px;line-height:16px;color:#141414;white-space:nowrap;">20 dBm/div</div><div style="position:absolute;left:8px;top:43px;font-size:14px;line-height:16px;color:#141414;white-space:nowrap;"></div><div style="position:absolute;left:8px;top:62px;font-size:14px;line-height:16px;color:#141414;white-space:nowrap;">FFTMag(C...</div></div>
<div style="position:absolute;left:451px;top:996px;width:40px;height:79px;border:1px solid #6a625b;border-radius:6px;background:linear-gradient(#383838,#2c2c2c 20%,#2a2a2a);"></div>
<div style="position:absolute;left:455px;top:1004px;width:32px;height:2px;background:#e8384f;"></div>
<div style="position:absolute;left:451px;top:1031px;font-size:20px;line-height:20px;color:#ececec;font-weight:normal;white-space:nowrap;width:40px;text-align:center;">3</div>
<div style="position:absolute;left:496px;top:996px;width:40px;height:79px;border:1px solid #6a625b;border-radius:6px;background:linear-gradient(#383838,#2c2c2c 20%,#2a2a2a);"></div>
<div style="position:absolute;left:500px;top:1004px;width:32px;height:2px;background:#90d030;"></div>
<div style="position:absolute;left:496px;top:1031px;font-size:20px;line-height:20px;color:#ececec;font-weight:normal;white-space:nowrap;width:40px;text-align:center;">4</div>
<div style="position:absolute;left:541px;top:996px;width:40px;height:79px;border:1px solid #6a625b;border-radius:6px;background:linear-gradient(#383838,#2c2c2c 20%,#2a2a2a);"></div>
<div style="position:absolute;left:545px;top:1004px;width:32px;height:2px;background:#f0922c;"></div>
<div style="position:absolute;left:541px;top:1031px;font-size:20px;line-height:20px;color:#ececec;font-weight:normal;white-space:nowrap;width:40px;text-align:center;">5</div>
<div style="position:absolute;left:586px;top:996px;width:40px;height:79px;border:1px solid #6a625b;border-radius:6px;background:linear-gradient(#383838,#2c2c2c 20%,#2a2a2a);"></div>
<div style="position:absolute;left:590px;top:1004px;width:32px;height:2px;background:#2a2ac0;"></div>
<div style="position:absolute;left:586px;top:1031px;font-size:20px;line-height:20px;color:#ececec;font-weight:normal;white-space:nowrap;width:40px;text-align:center;">6</div>
<div style="position:absolute;left:631px;top:996px;width:40px;height:79px;border:1px solid #6a625b;border-radius:6px;background:linear-gradient(#383838,#2c2c2c 20%,#2a2a2a);"></div>
<div style="position:absolute;left:635px;top:1004px;width:32px;height:2px;background:#e84aa8;"></div>
<div style="position:absolute;left:631px;top:1031px;font-size:20px;line-height:20px;color:#ececec;font-weight:normal;white-space:nowrap;width:40px;text-align:center;">7</div>
<div style="position:absolute;left:676px;top:996px;width:40px;height:79px;border:1px solid #6a625b;border-radius:6px;background:linear-gradient(#383838,#2c2c2c 20%,#2a2a2a);"></div>
<div style="position:absolute;left:680px;top:1004px;width:32px;height:2px;background:#22e0a8;"></div>
<div style="position:absolute;left:676px;top:1031px;font-size:20px;line-height:20px;color:#ececec;font-weight:normal;white-space:nowrap;width:40px;text-align:center;">8</div>
<div style="position:absolute;left:726px;top:997px;width:1px;height:78px;background:#5a534d;"></div>
<div style="position:absolute;left:737px;top:996px;width:40px;height:79px;border:1px solid #6a625b;border-radius:6px;background:linear-gradient(#383838,#2c2c2c 20%,#2a2a2a);"></div>
<div style="position:absolute;left:741px;top:1004px;width:32px;height:2px;background:#b02020;"></div>
<div style="position:absolute;left:737px;top:1016.0px;font-size:15px;line-height:15px;color:#ececec;font-weight:normal;white-space:nowrap;width:40px;text-align:center;">Add</div>
<div style="position:absolute;left:737px;top:1033.5px;font-size:15px;line-height:15px;color:#ececec;font-weight:normal;white-space:nowrap;width:40px;text-align:center;">New</div>
<div style="position:absolute;left:737px;top:1051.0px;font-size:15px;line-height:15px;color:#ececec;font-weight:normal;white-space:nowrap;width:40px;text-align:center;">Math</div>
<div style="position:absolute;left:782px;top:996px;width:40px;height:79px;border:1px solid #6a625b;border-radius:6px;background:linear-gradient(#383838,#2c2c2c 20%,#2a2a2a);"></div>
<div style="position:absolute;left:786px;top:1004px;width:32px;height:2px;background:#c8c8d0;"></div>
<div style="position:absolute;left:782px;top:1016.0px;font-size:15px;line-height:15px;color:#ececec;font-weight:normal;white-space:nowrap;width:40px;text-align:center;">Add</div>
<div style="position:absolute;left:782px;top:1033.5px;font-size:15px;line-height:15px;color:#ececec;font-weight:normal;white-space:nowrap;width:40px;text-align:center;">New</div>
<div style="position:absolute;left:782px;top:1051.0px;font-size:15px;line-height:15px;color:#ececec;font-weight:normal;white-space:nowrap;width:40px;text-align:center;">Ref</div>
<div style="position:absolute;left:827px;top:996px;width:40px;height:79px;border:1px solid #6a625b;border-radius:6px;background:linear-gradient(#383838,#2c2c2c 20%,#2a2a2a);"></div>
<div style="position:absolute;left:831px;top:1004px;width:32px;height:2px;background:#b848e8;"></div>
<div style="position:absolute;left:827px;top:1016.0px;font-size:15px;line-height:15px;color:#ececec;font-weight:normal;white-space:nowrap;width:40px;text-align:center;">Add</div>
<div style="position:absolute;left:827px;top:1033.5px;font-size:15px;line-height:15px;color:#ececec;font-weight:normal;white-space:nowrap;width:40px;text-align:center;">New</div>
<div style="position:absolute;left:827px;top:1051.0px;font-size:15px;line-height:15px;color:#ececec;font-weight:normal;white-space:nowrap;width:40px;text-align:center;">Bus</div>
<div style="position:absolute;left:877px;top:997px;width:1px;height:78px;background:#5a534d;"></div>
<div style="position:absolute;left:888px;top:996px;width:200px;height:79px;border-radius:5px;overflow:hidden;background:#c9c9c9;"><div style="position:absolute;left:0;top:0;width:200px;height:19px;background:#5a5a5a;"></div><div style="position:absolute;left:0;top:19px;width:200px;height:2px;background:#9a9a9a;"></div><div style="position:absolute;left:6px;top:1px;font-size:15px;line-height:17px;color:#f2f2f2;">AFG: Sine</div><div style="position:absolute;left:7px;top:24px;font-size:14px;line-height:16px;color:#141414;white-space:nowrap;">Freq: 1 kHz</div><div style="position:absolute;left:7px;top:43px;font-size:14px;line-height:16px;color:#141414;white-space:nowrap;">Amp: 500 mVpp</div><div style="position:absolute;left:7px;top:62px;font-size:14px;line-height:16px;color:#141414;white-space:nowrap;">Offset: 0 V</div></div>
<div style="position:absolute;left:1098px;top:997px;width:1px;height:78px;background:#5a534d;"></div>
<div style="position:absolute;left:1109px;top:996px;width:160px;height:79px;border-radius:5px;overflow:hidden;background:#c9c9c9;"><div style="position:absolute;left:0;top:0;width:160px;height:19px;background:#5a5a5a;"></div><div style="position:absolute;left:0;top:19px;width:160px;height:2px;background:#9a9a9a;"></div><div style="position:absolute;left:6px;top:1px;font-size:15px;line-height:17px;color:#f2f2f2;">Spectrum</div><div style="position:absolute;left:7px;top:24px;width:142px;height:16px;background:#000;"></div><div style="position:absolute;left:8px;top:24px;font-size:14px;line-height:16px;color:#2cc8d4;white-space:nowrap;">CF2: 1.00000000 kHz</div><div style="position:absolute;left:8px;top:43px;font-size:14px;line-height:16px;color:#141414;white-space:nowrap;">Span: 10.0000 kHz</div><div style="position:absolute;left:8px;top:62px;font-size:14px;line-height:16px;color:#141414;white-space:nowrap;">RBW: 500 Hz</div></div>
<div style="position:absolute;left:1279px;top:996px;width:200px;height:79px;border-radius:5px;overflow:hidden;background:#c9c9c9;"><div style="position:absolute;left:0;top:0;width:200px;height:19px;background:#5a5a5a;"></div><div style="position:absolute;left:0;top:19px;width:200px;height:2px;background:#9a9a9a;"></div><div style="position:absolute;left:6px;top:1px;font-size:15px;line-height:17px;color:#f2f2f2;">Horizontal</div><div style="position:absolute;left:6px;top:24px;font-size:14px;line-height:16px;color:#141414;white-space:nowrap;">400 μs/div</div><div style="position:absolute;left:113px;top:24px;font-size:14px;line-height:16px;color:#141414;white-space:nowrap;">4 ms</div><div style="position:absolute;left:6px;top:43px;font-size:14px;line-height:16px;color:#141414;white-space:nowrap;">SR: 625 MS/s</div><div style="position:absolute;left:113px;top:43px;font-size:14px;line-height:16px;color:#141414;white-space:nowrap;">1.6 ns/pt</div><div style="position:absolute;left:6px;top:62px;font-size:14px;line-height:16px;color:#141414;white-space:nowrap;">RL: 2.5 Mpts</div><div style="position:absolute;left:128px;top:62px;font-size:14px;line-height:16px;color:#141414;white-space:nowrap;">50%</div><svg style="left:113px;top:63px" width="12" height="15"><path d="M1 1H11V10H7.5L6 13.5L4.5 10H1Z" fill="#111" stroke="#f08a20" stroke-width="1.6"/><path d="M3.5 3.5H8.5M6 3.5V8.5" stroke="#fff" stroke-width="1.4"/></svg></div>
<div style="position:absolute;left:1489px;top:996px;width:160px;height:79px;border-radius:5px;overflow:hidden;background:#c9c9c9;"><div style="position:absolute;left:0;top:0;width:160px;height:19px;background:#5a5a5a;"></div><div style="position:absolute;left:0;top:19px;width:160px;height:2px;background:#9a9a9a;"></div><div style="position:absolute;left:6px;top:1px;font-size:15px;line-height:17px;color:#f2f2f2;">Trigger</div><div style="position:absolute;left:7px;top:24px;width:30px;height:17px;border-radius:5px;background:#f2ec30;border:1px solid #333;"></div><div style="position:absolute;left:7px;top:24px;font-size:14px;line-height:16px;color:#141414;white-space:nowrap;width:30px;text-align:center;">1</div><svg style="left:47px;top:26px" width="18" height="14"><path d="M1 13H5L12 2H17" stroke="#4a4a9a" stroke-width="1.5" fill="none"/></svg><div style="position:absolute;left:73px;top:24px;font-size:15px;line-height:16px;color:#141414;white-space:nowrap;">3.36 V</div></div>
<div style="position:absolute;left:1659px;top:996px;width:150px;height:79px;border-radius:5px;overflow:hidden;background:#c9c9c9;"><div style="position:absolute;left:0;top:0;width:150px;height:19px;background:#5a5a5a;"></div><div style="position:absolute;left:0;top:19px;width:150px;height:2px;background:#9a9a9a;"></div><div style="position:absolute;left:6px;top:1px;font-size:15px;line-height:17px;color:#f2f2f2;">Acquisition</div><div style="position:absolute;left:6px;top:24px;font-size:14px;line-height:16px;color:#141414;white-space:nowrap;">Manual,</div><div style="position:absolute;left:88px;top:24px;font-size:14px;line-height:16px;color:#141414;white-space:nowrap;">Analyze</div><div style="position:absolute;left:6px;top:43px;font-size:14px;line-height:16px;color:#141414;white-space:nowrap;">High Res: 14 bits</div><div style="position:absolute;left:6px;top:62px;font-size:14px;line-height:16px;color:#141414;white-space:nowrap;">Single: 1 /1</div></div>
<div style="position:absolute;left:1819px;top:997px;width:90px;height:35px;border-radius:4px;background:#ee1c26;border:1px solid #888;"></div>
<div style="position:absolute;left:1819px;top:1008px;font-size:14px;line-height:14px;color:#fff;font-weight:bold;white-space:nowrap;width:90px;text-align:center;">Stopped</div>
<div style="position:absolute;left:1819px;top:1040px;width:90px;height:36px;border-radius:4px;background:#c9c9c9;"></div>
<div style="position:absolute;left:1819px;top:1043px;font-size:14.5px;line-height:14.5px;color:#141414;font-weight:normal;white-space:nowrap;width:90px;text-align:center;">03 May 2019</div>
<div style="position:absolute;left:1819px;top:1059px;font-size:14.5px;line-height:14.5px;color:#141414;font-weight:normal;white-space:nowrap;width:90px;text-align:center;">3:14:44 PM</div>
</body></html>
